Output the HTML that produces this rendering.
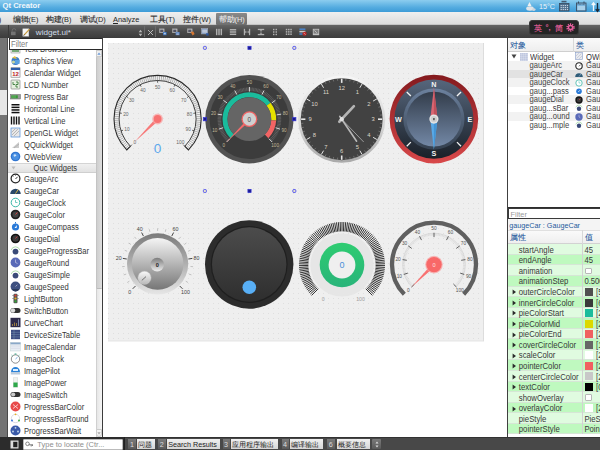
<!DOCTYPE html><html><head><meta charset="utf-8"><style>
html,body{margin:0;padding:0;width:600px;height:450px;overflow:hidden;background:#fff;position:relative;font-family:"Liberation Sans",sans-serif;}
.t{position:absolute;white-space:nowrap;line-height:1;font-family:"Liberation Sans",sans-serif;}
div{box-sizing:border-box;}
</style></head><body>
<div style="position:absolute;left:0px;top:0px;width:600px;height:12px;background:linear-gradient(#8ccdef,#55ace0 60%,#3d9bd7);"></div>
<div class="t" style="left:2.6px;top:2.2px;font-size:7.6px;color:#f2f7fb;font-weight:bold;">Qt Creator</div>
<div style="position:absolute;left:0px;top:12px;width:600px;height:13px;background:linear-gradient(#efefef,#dcdcdc);border-bottom:1px solid #c4c4c4;"></div>
<div class="t" style="left:-1.2px;top:15.9px;font-size:7.4px;color:#262626;">)</div>
<div class="t" style="left:12.5px;top:15.9px;font-size:7.4px;color:#262626;"><span style="font-size:7.8px;-webkit-text-stroke:0.12px #262626;">编</span><span style="font-size:7.8px;-webkit-text-stroke:0.12px #262626;">辑</span>(E)</div>
<div class="t" style="left:45.5px;top:15.9px;font-size:7.4px;color:#262626;"><span style="font-size:7.8px;-webkit-text-stroke:0.12px #262626;">构</span><span style="font-size:7.8px;-webkit-text-stroke:0.12px #262626;">建</span>(B)</div>
<div class="t" style="left:79.5px;top:15.9px;font-size:7.4px;color:#262626;"><span style="font-size:7.8px;-webkit-text-stroke:0.12px #262626;">调</span><span style="font-size:7.8px;-webkit-text-stroke:0.12px #262626;">试</span>(D)</div>
<div class="t" style="left:113px;top:15.9px;font-size:7.4px;color:#262626;"><u>A</u>nalyze</div>
<div class="t" style="left:149.5px;top:15.9px;font-size:7.4px;color:#262626;"><span style="font-size:7.8px;-webkit-text-stroke:0.12px #262626;">工</span><span style="font-size:7.8px;-webkit-text-stroke:0.12px #262626;">具</span>(T)</div>
<div class="t" style="left:183px;top:15.9px;font-size:7.4px;color:#262626;"><span style="font-size:7.8px;-webkit-text-stroke:0.12px #262626;">控</span><span style="font-size:7.8px;-webkit-text-stroke:0.12px #262626;">件</span>(W)</div>
<div style="position:absolute;left:215.5px;top:12.5px;width:31.5px;height:12.5px;background:linear-gradient(#8a8a8a,#6e6e6e);border-radius:1px;"></div>
<div class="t" style="left:218.5px;top:15.9px;font-size:7.4px;color:#ececec;"><span style="font-size:7.8px;-webkit-text-stroke:0.1px #ececec;">帮</span><span style="font-size:7.8px;-webkit-text-stroke:0.1px #ececec;">助</span>(H)</div>
<div style="position:absolute;left:0px;top:25px;width:600px;height:13px;background:linear-gradient(#646464,#4a4a4a 50%,#3c3c3c);"></div>
<div style="position:absolute;left:7.5px;top:25px;width:1px;height:13px;background:#3a3a3a;"></div>
<svg style="position:absolute;left:10px;top:28px" width="8" height="8" viewBox="0 0 8 8"><path d="M2.2 3.6V2.4a1.8 1.8 0 0 1 3.6 0" stroke="#707070" stroke-width="0.9" fill="none"/><rect x="1" y="3.6" width="4.6" height="3.6" fill="#747474"/></svg>
<svg style="position:absolute;left:22px;top:27.5px" width="9" height="9" viewBox="0 0 9 9"><rect x="0.8" y="0.8" width="6" height="7.4" fill="#f4f4f4" stroke="#ccc" stroke-width="0.4"/><path d="M2 7.2L7.6 1.2" stroke="#c89a3a" stroke-width="1.2"/><path d="M1.6 7.6L2.4 6.6" stroke="#333" stroke-width="0.8"/></svg>
<div class="t" style="left:35.8px;top:28.9px;font-size:8.1px;color:#d2deea;">widget.ui*</div>
<svg style="position:absolute;left:137.5px;top:28.5px" width="5" height="8" viewBox="0 0 5 8"><path d="M2.5 0.8L4.3 3.2H0.7Z M2.5 7.2L4.3 4.8H0.7Z" fill="#bbb"/></svg>
<div style="position:absolute;left:144px;top:26px;width:1px;height:11px;background:#3a3a3a;border-right:1px solid #6a6a6a;"></div>
<svg style="position:absolute;left:147px;top:28.5px" width="7" height="7" viewBox="0 0 7 7"><path d="M1 1L6 6M6 1L1 6" stroke="#c6c6c6" stroke-width="0.9"/></svg>
<div style="position:absolute;left:155px;top:26px;width:1px;height:11px;background:#3a3a3a;border-right:1px solid #6a6a6a;"></div>
<svg style="position:absolute;left:158.5px;top:27.5px;opacity:0.85" width="8" height="8" viewBox="0 0 10 10"><rect x="0.5" y="1" width="6" height="5" fill="#d8d8d8" stroke="#aaa" stroke-width="0.5"/><rect x="1.5" y="2" width="4" height="3" fill="#556"/><rect x="5" y="5" width="4.5" height="4" fill="#3a7bd5"/><rect x="6" y="6" width="2.5" height="2" fill="#cfe0f5"/></svg>
<svg style="position:absolute;left:172.3px;top:27.5px;opacity:0.85" width="8" height="8" viewBox="0 0 10 10"><rect x="0.5" y="1" width="6" height="5" fill="#d8d8d8" stroke="#aaa" stroke-width="0.5"/><rect x="1.5" y="2" width="4" height="3" fill="#556"/><rect x="4.5" y="5" width="5" height="4" fill="#5b8fd8"/><rect x="5.5" y="6" width="3" height="0.8" fill="#dde"/><rect x="5.5" y="7.5" width="3" height="0.8" fill="#dde"/></svg>
<svg style="position:absolute;left:186.8px;top:27.5px;opacity:0.85" width="8" height="8" viewBox="0 0 10 10"><rect x="0.5" y="1" width="6" height="5" fill="#d8d8d8" stroke="#aaa" stroke-width="0.5"/><rect x="1.5" y="2" width="4" height="3" fill="#556"/><path d="M4.5 5L8 4.5L9.5 7.5L7 9.5Z" fill="#f08030"/></svg>
<svg style="position:absolute;left:201px;top:27.5px;opacity:0.85" width="8" height="8" viewBox="0 0 10 10"><rect x="0.5" y="0.5" width="8" height="7" fill="#8aa8d8" stroke="#ccc" stroke-width="0.5"/><rect x="1.5" y="2" width="6" height="4" fill="#d0dcef"/><rect x="6.5" y="6.5" width="3" height="3" fill="#2a5ab0"/></svg>
<svg style="position:absolute;left:214.8px;top:27.5px;opacity:0.85" width="8" height="8" viewBox="0 0 10 10"><rect x="1.2" y="1" width="1.8" height="8" fill="#c4c4c4"/><rect x="4.1" y="1" width="1.8" height="8" fill="#c4c4c4"/><rect x="7" y="1" width="1.8" height="8" fill="#c4c4c4"/></svg>
<svg style="position:absolute;left:229px;top:27.5px;opacity:0.85" width="8" height="8" viewBox="0 0 10 10"><rect x="1" y="1.3" width="8" height="1.8" fill="#c4c4c4"/><rect x="1" y="4.1" width="8" height="1.8" fill="#c4c4c4"/><rect x="1" y="7" width="8" height="1.8" fill="#c4c4c4"/></svg>
<svg style="position:absolute;left:242.7px;top:27.5px;opacity:0.85" width="8" height="8" viewBox="0 0 10 10"><rect x="1" y="1" width="1.6" height="8" fill="#c4c4c4"/><rect x="7.4" y="1" width="1.6" height="8" fill="#c4c4c4"/><path d="M2.6 5H7.4M3.2 3.6L2.6 5L3.2 6.4M6.8 3.6L7.4 5L6.8 6.4" stroke="#c4c4c4" stroke-width="0.8" fill="none"/></svg>
<svg style="position:absolute;left:256.8px;top:27.5px;opacity:0.85" width="8" height="8" viewBox="0 0 10 10"><rect x="1" y="1" width="8" height="1.6" fill="#c4c4c4"/><rect x="1" y="7.4" width="8" height="1.6" fill="#c4c4c4"/><path d="M5 2.6V7.4M3.6 3.2L5 2.6L6.4 3.2M3.6 6.8L5 7.4L6.4 6.8" stroke="#c4c4c4" stroke-width="0.8" fill="none"/></svg>
<svg style="position:absolute;left:270.7px;top:27.5px;opacity:0.85" width="8" height="8" viewBox="0 0 10 10"><rect x="2.5" y="1" width="1.8" height="1.8" fill="#c4c4c4"/><rect x="5.7" y="1" width="1.8" height="1.8" fill="#c4c4c4"/><rect x="2.5" y="4.1" width="1.8" height="1.8" fill="#c4c4c4"/><rect x="5.7" y="4.1" width="1.8" height="1.8" fill="#c4c4c4"/><rect x="2.5" y="7.2" width="1.8" height="1.8" fill="#c4c4c4"/><rect x="5.7" y="7.2" width="1.8" height="1.8" fill="#c4c4c4"/></svg>
<svg style="position:absolute;left:284.7px;top:27.5px;opacity:0.85" width="8" height="8" viewBox="0 0 10 10"><rect x="1.0" y="1.0" width="1.9" height="1.9" fill="#c4c4c4"/><rect x="1.0" y="3.9" width="1.9" height="1.9" fill="#c4c4c4"/><rect x="1.0" y="6.8" width="1.9" height="1.9" fill="#c4c4c4"/><rect x="3.8" y="1.0" width="1.9" height="1.9" fill="#c4c4c4"/><rect x="3.8" y="3.9" width="1.9" height="1.9" fill="#c4c4c4"/><rect x="3.8" y="6.8" width="1.9" height="1.9" fill="#c4c4c4"/><rect x="6.6" y="1.0" width="1.9" height="1.9" fill="#c4c4c4"/><rect x="6.6" y="3.9" width="1.9" height="1.9" fill="#c4c4c4"/><rect x="6.6" y="6.8" width="1.9" height="1.9" fill="#c4c4c4"/></svg>
<svg style="position:absolute;left:298.5px;top:27.5px;opacity:0.85" width="8" height="8" viewBox="0 0 10 10"><rect x="0.5" y="0.5" width="7.5" height="2" fill="#4a8ad8"/><rect x="0.5" y="3.5" width="7.5" height="2" fill="#ddd"/><rect x="0.5" y="6.5" width="4" height="2" fill="#4a8ad8"/><circle cx="7" cy="7.2" r="2.6" fill="#d02020"/><path d="M5.8 6L8.2 8.4" stroke="#fff" stroke-width="0.7"/></svg>
<svg style="position:absolute;left:312.3px;top:27.5px;opacity:0.85" width="8" height="8" viewBox="0 0 10 10"><rect x="1" y="1" width="8" height="8" fill="#d8d8d8"/><rect x="2" y="2" width="6" height="5" fill="#888"/><path d="M3 3L6 6" stroke="#eee" stroke-width="0.9"/></svg>
<div style="position:absolute;left:529.3px;top:20.4px;width:49.3px;height:14.2px;background:#242424;border-radius:3px;border:0.6px solid #3a3a3a;"></div>
<div class="t" style="left:533.5px;top:24.2px;font-size:8.4px;color:#e8609e;-webkit-text-stroke:0.15px #e8609e;">英</div>
<div class="t" style="left:545.5px;top:23.6px;font-size:7.5px;color:#e8609e;font-weight:bold;">°,</div>
<div class="t" style="left:554.5px;top:24.2px;font-size:8.4px;color:#e8609e;-webkit-text-stroke:0.15px #e8609e;">简</div>
<svg style="position:absolute;left:565.5px;top:23.3px" width="9" height="9" viewBox="0 0 9 9"><circle cx="4.5" cy="4.5" r="3.4" fill="none" stroke="#e8609e" stroke-width="1.6" stroke-dasharray="1.2 0.95"/><circle cx="4.5" cy="4.5" r="2.7" fill="#e8609e"/><circle cx="4.5" cy="4.5" r="1.3" fill="#262626"/></svg>
<svg style="position:absolute;left:525px;top:1px" width="12" height="10" viewBox="0 0 12 10"><path d="M4.5 1L6.5 5H2.5Z" fill="#f0f0f0"/><ellipse cx="5" cy="7.5" rx="3.8" ry="2.2" fill="#e0e4e8"/><ellipse cx="8.8" cy="8.6" rx="1.8" ry="1.3" fill="#d0d6dc"/></svg>
<div class="t" style="left:539px;top:2.6px;font-size:7.2px;color:#eef4f8;">15°C</div>
<svg style="position:absolute;left:558px;top:0px" width="12" height="12" viewBox="0 0 12 12"><rect x="1.5" y="3.5" width="9.5" height="7.5" fill="#50708e" stroke="#34495e" stroke-width="0.8"/><rect x="2.6" y="5" width="1.2" height="1.1" fill="#c8d4e0"/><rect x="2.6" y="7" width="1.2" height="1.1" fill="#c8d4e0"/><rect x="2.6" y="9" width="1.2" height="1.1" fill="#c8d4e0"/><rect x="4.7" y="5" width="1.2" height="1.1" fill="#c8d4e0"/><rect x="4.7" y="7" width="1.2" height="1.1" fill="#c8d4e0"/><rect x="4.7" y="9" width="1.2" height="1.1" fill="#c8d4e0"/><rect x="6.800000000000001" y="5" width="1.2" height="1.1" fill="#c8d4e0"/><rect x="6.800000000000001" y="7" width="1.2" height="1.1" fill="#c8d4e0"/><rect x="6.800000000000001" y="9" width="1.2" height="1.1" fill="#c8d4e0"/><rect x="8.9" y="5" width="1.2" height="1.1" fill="#c8d4e0"/><rect x="8.9" y="7" width="1.2" height="1.1" fill="#c8d4e0"/><rect x="8.9" y="9" width="1.2" height="1.1" fill="#c8d4e0"/><rect x="3.5" y="0.8" width="5" height="1.6" fill="#465a70"/></svg>
<svg style="position:absolute;left:574.5px;top:0px" width="12" height="12" viewBox="0 0 12 12"><rect x="1.5" y="3" width="9.5" height="8" fill="#7ab4dc" stroke="#3a4e64" stroke-width="0.9"/><rect x="2.5" y="6" width="7.5" height="4" fill="#a8d0ea"/><path d="M2.5 4.5H10" stroke="#3a4e64" stroke-width="0.6" stroke-dasharray="0.8 0.6"/><rect x="3" y="1.5" width="1" height="2" fill="#3a4e64"/><rect x="8.5" y="1.5" width="1" height="2" fill="#3a4e64"/></svg>
<svg style="position:absolute;left:591px;top:0.5px" width="9" height="12" viewBox="0 0 9 12"><path d="M2.5 10V2.5M0.8 4L2.5 1.8L4.2 4" stroke="#f4f8fb" stroke-width="1.3" fill="none"/><path d="M6.5 2V10M4.8 8.2L6.5 10.4L8.2 8.2" stroke="#1e2a38" stroke-width="1.3" fill="none"/></svg>
<div style="position:absolute;left:0px;top:38px;width:8px;height:399px;background:#747474;"></div>
<div style="position:absolute;left:0px;top:90px;width:7.5px;height:25px;background:#e6e6e6;"></div>
<div style="position:absolute;left:7.2px;top:38px;width:1px;height:399px;background:#4a4a4a;"></div>
<div style="position:absolute;left:0px;top:437px;width:600px;height:13px;background:#484848;border-top:0.8px solid #333;"></div>
<div style="position:absolute;left:0px;top:437px;width:124.5px;height:13px;background:#2c2c2c;border-right:1px solid #222;"></div>
<div style="position:absolute;left:8px;top:38px;width:95px;height:399px;background:#fff;"></div>
<svg style="position:absolute;left:9.5px;top:43.2px" width="11" height="11" viewBox="0 0 11 11"><rect x="1" y="1" width="9" height="9" fill="#eee" stroke="#999" stroke-width="0.6"/><rect x="2" y="6" width="7" height="3" fill="#7a7"/></svg>
<div class="t" style="left:24px;top:45.800000000000004px;font-size:7.6px;color:#383838;transform:scaleY(1.12);transform-origin:0 100%;">Text Browser</div>
<svg style="position:absolute;left:9.5px;top:55.2px" width="11" height="11" viewBox="0 0 11 11"><circle cx="5.5" cy="6" r="4" fill="#3b7bc8"/><path d="M2 3L5 1L7 4Z" fill="#e8c040"/><rect x="5" y="5" width="4.5" height="4" fill="#5aa0e0"/><circle cx="3.5" cy="7" r="1.6" fill="#c8d8a0"/></svg>
<div class="t" style="left:24px;top:57.800000000000004px;font-size:7.6px;color:#383838;transform:scaleY(1.12);transform-origin:0 100%;">Graphics View</div>
<svg style="position:absolute;left:9.5px;top:67.2px" width="11" height="11" viewBox="0 0 11 11"><rect x="1" y="0.8" width="9" height="9.4" fill="#fafafa" stroke="#777" stroke-width="0.6"/><rect x="1" y="0.8" width="9" height="2.2" fill="#2c5ca8"/><text x="5.5" y="9" font-size="6" font-weight="bold" text-anchor="middle" fill="#c02020" font-family="Liberation Sans">12</text></svg>
<div class="t" style="left:24px;top:69.8px;font-size:7.6px;color:#383838;transform:scaleY(1.12);transform-origin:0 100%;">Calendar Widget</div>
<svg style="position:absolute;left:9.5px;top:79.2px" width="11" height="11" viewBox="0 0 11 11"><rect x="1" y="1" width="9" height="9" rx="0.8" fill="#e6f0e0" stroke="#777" stroke-width="0.6"/><path d="M3 3V5.5H5M6 3H8V5.5H6V8H8" stroke="#3a7a3a" stroke-width="0.9" fill="none"/></svg>
<div class="t" style="left:24px;top:81.8px;font-size:7.6px;color:#383838;transform:scaleY(1.12);transform-origin:0 100%;">LCD Number</div>
<svg style="position:absolute;left:9.5px;top:91.2px" width="11" height="11" viewBox="0 0 11 11"><rect x="0.5" y="3.5" width="10" height="4.5" fill="#999" stroke="#666" stroke-width="0.5"/><rect x="1.3" y="4.3" width="6.5" height="3" fill="#3a9a3a"/><path d="M3 4.3V7.3M5 4.3V7.3" stroke="#9c9" stroke-width="0.5"/></svg>
<div class="t" style="left:24px;top:93.8px;font-size:7.6px;color:#383838;transform:scaleY(1.12);transform-origin:0 100%;">Progress Bar</div>
<svg style="position:absolute;left:9.5px;top:103.2px" width="11" height="11" viewBox="0 0 11 11"><rect x="1.5" y="1" width="8" height="1.5" fill="#111"/><rect x="1.5" y="3.6" width="8" height="1.5" fill="#111"/><rect x="1.5" y="6.2" width="8" height="1.5" fill="#111"/><rect x="1.5" y="8.8" width="8" height="1.5" fill="#111"/></svg>
<div class="t" style="left:24px;top:105.8px;font-size:7.6px;color:#383838;transform:scaleY(1.12);transform-origin:0 100%;">Horizontal Line</div>
<svg style="position:absolute;left:9.5px;top:115.2px" width="11" height="11" viewBox="0 0 11 11"><rect x="0.8" y="1.5" width="1.4" height="8" fill="#111"/><rect x="3.3" y="1.5" width="1.4" height="8" fill="#111"/><rect x="5.8" y="1.5" width="1.4" height="8" fill="#111"/><rect x="8.3" y="1.5" width="1.4" height="8" fill="#111"/></svg>
<div class="t" style="left:24px;top:117.8px;font-size:7.6px;color:#383838;transform:scaleY(1.12);transform-origin:0 100%;">Vertical Line</div>
<svg style="position:absolute;left:9.5px;top:127.19999999999999px" width="11" height="11" viewBox="0 0 11 11"><rect x="1" y="1" width="9" height="9" fill="#e8e8e8" stroke="#4a8ad8" stroke-width="0.7"/><path d="M2 8L8 2M4 9L9 4M1.5 5.5L5.5 1.5" stroke="#aaa" stroke-width="0.8"/></svg>
<div class="t" style="left:24px;top:129.79999999999998px;font-size:7.6px;color:#383838;transform:scaleY(1.12);transform-origin:0 100%;">OpenGL Widget</div>
<svg style="position:absolute;left:9.5px;top:139.2px" width="11" height="11" viewBox="0 0 11 11"><path d="M2 9L9 3V9Z" fill="#ccc"/><path d="M4 9L9 5" stroke="#999" stroke-width="0.5"/></svg>
<div class="t" style="left:24px;top:141.79999999999998px;font-size:7.6px;color:#383838;transform:scaleY(1.12);transform-origin:0 100%;">QQuickWidget</div>
<svg style="position:absolute;left:9.5px;top:151.2px" width="11" height="11" viewBox="0 0 11 11"><circle cx="5.5" cy="5.5" r="4.8" fill="#2f74d0"/><circle cx="5.5" cy="5.5" r="3.5" fill="#4a90e2"/><path d="M3.5 4Q5 2.5 6.5 4.5Q5 6 4 5.5Z" fill="#cfe3f8"/></svg>
<div class="t" style="left:24px;top:153.79999999999998px;font-size:7.6px;color:#383838;transform:scaleY(1.12);transform-origin:0 100%;">QWebView</div>
<div style="position:absolute;left:8px;top:162.7px;width:88px;height:10.4px;background:linear-gradient(#f0f0f0,#e2e2e2);border-top:1px solid #d4d4d4;border-bottom:1px solid #cfcfcf;"></div>
<svg style="position:absolute;left:11px;top:165.5px" width="5" height="4" viewBox="0 0 5 4"><path d="M0.5 0.5H4.5L2.5 3.5Z" fill="#bbb"/></svg>
<div class="t" style="left:33.6px;top:164.5px;font-size:7.6px;color:#333;transform:scaleY(1.1);transform-origin:0 100%;">Quc Widgets</div>
<svg style="position:absolute;left:9.5px;top:173.4px" width="11" height="11" viewBox="0 0 11 11"><circle cx="5.5" cy="5.5" r="4.4" fill="#fff" stroke="#222" stroke-width="1.2"/><path d="M5.5 6L7.6 3.8" stroke="#222" stroke-width="0.9"/><path d="M3 3.2L3.6 3.8M5.5 2V2.8M8 3.2" stroke="#222" stroke-width="0.6"/></svg>
<div class="t" style="left:24px;top:176.0px;font-size:7.6px;color:#383838;transform:scaleY(1.12);transform-origin:0 100%;">GaugeArc</div>
<svg style="position:absolute;left:9.5px;top:185.4px" width="11" height="11" viewBox="0 0 11 11"><path d="M0.2 9A5.3 5.3 0 0 1 10.8 9Z" fill="#2a4868"/><path d="M5.5 8.6L8.2 4.6" stroke="#e8c040" stroke-width="0.9"/></svg>
<div class="t" style="left:24px;top:188.0px;font-size:7.6px;color:#383838;transform:scaleY(1.12);transform-origin:0 100%;">GaugeCar</div>
<svg style="position:absolute;left:9.5px;top:197.4px" width="11" height="11" viewBox="0 0 11 11"><circle cx="5.5" cy="5.5" r="4.3" fill="#fff" stroke="#3ab8a8" stroke-width="1"/><path d="M5.5 3V5.5H7.5" stroke="#3ab8a8" stroke-width="0.7" fill="none"/></svg>
<div class="t" style="left:24px;top:200.0px;font-size:7.6px;color:#383838;transform:scaleY(1.12);transform-origin:0 100%;">GaugeClock</div>
<svg style="position:absolute;left:9.5px;top:209.4px" width="11" height="11" viewBox="0 0 11 11"><circle cx="5.5" cy="5.5" r="4.8" fill="#222"/><circle cx="5.5" cy="5.5" r="3" fill="#444"/><path d="M5.5 5.5L7.5 3.5" stroke="#e04040" stroke-width="0.9"/></svg>
<div class="t" style="left:24px;top:212.0px;font-size:7.6px;color:#383838;transform:scaleY(1.12);transform-origin:0 100%;">GaugeColor</div>
<svg style="position:absolute;left:9.5px;top:221.4px" width="11" height="11" viewBox="0 0 11 11"><circle cx="5.5" cy="6" r="3.6" fill="#2a7ad8"/><path d="M4.5 7L7 4L6.5 7Z" fill="#fff"/><rect x="5" y="1" width="1" height="1.5" fill="#2a7ad8"/></svg>
<div class="t" style="left:24px;top:224.0px;font-size:7.6px;color:#383838;transform:scaleY(1.12);transform-origin:0 100%;">GaugeCompass</div>
<svg style="position:absolute;left:9.5px;top:233.4px" width="11" height="11" viewBox="0 0 11 11"><circle cx="5.5" cy="5.5" r="4.8" fill="#111"/><circle cx="5.5" cy="5.5" r="3.2" fill="#3a3a3a"/><path d="M5.5 5.5L7.2 3.6" stroke="#e04040" stroke-width="0.8"/></svg>
<div class="t" style="left:24px;top:236.0px;font-size:7.6px;color:#383838;transform:scaleY(1.12);transform-origin:0 100%;">GaugeDial</div>
<svg style="position:absolute;left:9.5px;top:245.4px" width="11" height="11" viewBox="0 0 11 11"><path d="M1.2 5A4.5 4.5 0 0 1 9.8 5" stroke="#7ac87a" stroke-width="0.6" fill="none"/><circle cx="5.5" cy="6.6" r="2.9" fill="#3a4a78"/></svg>
<div class="t" style="left:24px;top:248.0px;font-size:7.6px;color:#383838;transform:scaleY(1.12);transform-origin:0 100%;">GaugeProgressBar</div>
<svg style="position:absolute;left:9.5px;top:257.4px" width="11" height="11" viewBox="0 0 11 11"><circle cx="5.5" cy="5.5" r="4.9" fill="#5a6ab8"/><path d="M5.5 2.5V5.5L7.5 6.5" stroke="#dde" stroke-width="0.6" fill="none"/></svg>
<div class="t" style="left:24px;top:260.0px;font-size:7.6px;color:#383838;transform:scaleY(1.12);transform-origin:0 100%;">GaugeRound</div>
<svg style="position:absolute;left:9.5px;top:269.4px" width="11" height="11" viewBox="0 0 11 11"><path d="M1.2 5A4.5 4.5 0 0 1 9.8 5" stroke="#7ac87a" stroke-width="0.6" fill="none"/><circle cx="5.5" cy="6.6" r="2.9" fill="#3a4a78"/></svg>
<div class="t" style="left:24px;top:272.0px;font-size:7.6px;color:#383838;transform:scaleY(1.12);transform-origin:0 100%;">GaugeSimple</div>
<svg style="position:absolute;left:9.5px;top:281.4px" width="11" height="11" viewBox="0 0 11 11"><circle cx="5.5" cy="5.5" r="4.9" fill="#3e5080"/><path d="M1.5 8A4.5 4.5 0 0 0 9.5 8Z" fill="#2a3a5a"/><path d="M5.5 5.5L7.3 3.8" stroke="#dde" stroke-width="0.6"/></svg>
<div class="t" style="left:24px;top:284.0px;font-size:7.6px;color:#383838;transform:scaleY(1.12);transform-origin:0 100%;">GaugeSpeed</div>
<svg style="position:absolute;left:9.5px;top:293.4px" width="11" height="11" viewBox="0 0 11 11"><rect x="3.5" y="0.8" width="4" height="9.5" rx="1" fill="#555"/><circle cx="5.5" cy="2.6" r="1.1" fill="#e04030"/><circle cx="5.5" cy="5.5" r="1.1" fill="#e8b020"/><circle cx="5.5" cy="8.4" r="1.1" fill="#3a3"/><path d="M2.5 2.5H3.5M7.5 2.5H8.5M2.5 5.5H3.5M7.5 5.5H8.5" stroke="#555" stroke-width="0.8"/></svg>
<div class="t" style="left:24px;top:296.0px;font-size:7.6px;color:#383838;transform:scaleY(1.12);transform-origin:0 100%;">LightButton</div>
<svg style="position:absolute;left:9.5px;top:305.4px" width="11" height="11" viewBox="0 0 11 11"><rect x="0.5" y="3" width="10" height="5" rx="2.5" fill="#333"/><circle cx="3" cy="5.5" r="2.2" fill="#ddd"/></svg>
<div class="t" style="left:24px;top:308.0px;font-size:7.6px;color:#383838;transform:scaleY(1.12);transform-origin:0 100%;">SwitchButton</div>
<svg style="position:absolute;left:9.5px;top:317.4px" width="11" height="11" viewBox="0 0 11 11"><rect x="0.5" y="0.8" width="10" height="9.4" fill="#2d2a4a"/><path d="M2.5 9V7M4.5 9V5.5M6.5 9V6M8.5 9V2.5" stroke="#c8a040" stroke-width="0.7"/><path d="M8.5 9V2.5" stroke="#6a8ad8" stroke-width="0.7"/></svg>
<div class="t" style="left:24px;top:320.0px;font-size:7.6px;color:#383838;transform:scaleY(1.12);transform-origin:0 100%;">CurveChart</div>
<svg style="position:absolute;left:9.5px;top:329.4px" width="11" height="11" viewBox="0 0 11 11"><rect x="1" y="0.8" width="9" height="9.4" fill="#3a4a80"/><path d="M1 3.3H10M1 5.6H10M1 7.9H10M4 0.8V10.2" stroke="#8ab" stroke-width="0.4"/></svg>
<div class="t" style="left:24px;top:332.0px;font-size:7.6px;color:#383838;transform:scaleY(1.12);transform-origin:0 100%;">DeviceSizeTable</div>
<svg style="position:absolute;left:9.5px;top:341.4px" width="11" height="11" viewBox="0 0 11 11"><rect x="0.5" y="1.5" width="10" height="8.5" fill="#e8eef4" stroke="#bcc" stroke-width="0.4"/><rect x="0.5" y="1.5" width="10" height="1.8" fill="#8aa8c8"/><path d="M1 5H10M1 7.3H10" stroke="#ccd" stroke-width="0.5"/></svg>
<div class="t" style="left:24px;top:344.0px;font-size:7.6px;color:#383838;transform:scaleY(1.12);transform-origin:0 100%;">ImageCalendar</div>
<svg style="position:absolute;left:9.5px;top:353.4px" width="11" height="11" viewBox="0 0 11 11"><circle cx="5.5" cy="6" r="4.2" fill="#fff" stroke="#444" stroke-width="0.6"/><path d="M5.5 6L7.5 4.2" stroke="#3a8ad8" stroke-width="0.7"/><rect x="4.6" y="0.5" width="1.8" height="1" fill="#3a8"/><path d="M1.5 2L2.8 3M9.5 2L8.2 3" stroke="#3a8" stroke-width="0.6"/></svg>
<div class="t" style="left:24px;top:356.0px;font-size:7.6px;color:#383838;transform:scaleY(1.12);transform-origin:0 100%;">ImageClock</div>
<svg style="position:absolute;left:9.5px;top:365.4px" width="11" height="11" viewBox="0 0 11 11"><path d="M1 7A4.5 5 0 0 1 10 7Z" fill="#2a82d8"/><rect x="0.8" y="7" width="9.4" height="2.5" fill="#bcd"/><rect x="3" y="4" width="5" height="2" fill="#dfefff"/></svg>
<div class="t" style="left:24px;top:368.0px;font-size:7.6px;color:#383838;transform:scaleY(1.12);transform-origin:0 100%;">ImagePilot</div>
<svg style="position:absolute;left:9.5px;top:377.4px" width="11" height="11" viewBox="0 0 11 11"><rect x="3.2" y="0.8" width="4.6" height="9.5" fill="#eef2ee" stroke="#ccc" stroke-width="0.4"/><rect x="3.4" y="5.5" width="4.2" height="4.6" fill="#2ea84a"/></svg>
<div class="t" style="left:24px;top:380.0px;font-size:7.6px;color:#383838;transform:scaleY(1.12);transform-origin:0 100%;">ImagePower</div>
<svg style="position:absolute;left:9.5px;top:389.4px" width="11" height="11" viewBox="0 0 11 11"><rect x="0.5" y="3" width="10" height="5" rx="2.5" fill="#333"/><circle cx="3.2" cy="5.5" r="2.1" fill="#ccc"/></svg>
<div class="t" style="left:24px;top:392.0px;font-size:7.6px;color:#383838;transform:scaleY(1.12);transform-origin:0 100%;">ImageSwitch</div>
<svg style="position:absolute;left:9.5px;top:401.4px" width="11" height="11" viewBox="0 0 11 11"><circle cx="5.5" cy="5.5" r="5" fill="#e84a4a"/><path d="M3 3.5L5.5 5.5L8 3.5M3 7.5L5.5 5.5L8 7.5" stroke="#fff" stroke-width="0.7" fill="none"/></svg>
<div class="t" style="left:24px;top:404.0px;font-size:7.6px;color:#383838;transform:scaleY(1.12);transform-origin:0 100%;">ProgressBarColor</div>
<svg style="position:absolute;left:9.5px;top:413.4px" width="11" height="11" viewBox="0 0 11 11"><circle cx="5.5" cy="5.5" r="4.2" fill="none" stroke="#aab" stroke-width="0.4"/><circle cx="5.5" cy="1.3" r="0.9" fill="#e8b020"/><circle cx="9" cy="7.5" r="0.9" fill="#3a3"/><circle cx="2" cy="7.5" r="0.9" fill="#2a6ad8"/></svg>
<div class="t" style="left:24px;top:416.0px;font-size:7.6px;color:#383838;transform:scaleY(1.12);transform-origin:0 100%;">ProgressBarRound</div>
<svg style="position:absolute;left:9.5px;top:425.4px" width="11" height="11" viewBox="0 0 11 11"><circle cx="5.5" cy="5.5" r="5" fill="#3a5aa8"/><circle cx="5.5" cy="2.8" r="0.9" fill="#cde"/><circle cx="3" cy="6.5" r="0.9" fill="#cde"/><circle cx="8" cy="6.5" r="0.9" fill="#cde"/></svg>
<div class="t" style="left:24px;top:428.0px;font-size:7.6px;color:#383838;transform:scaleY(1.12);transform-origin:0 100%;">ProgressBarWait</div>
<div style="position:absolute;left:8.5px;top:38px;width:94px;height:11.8px;background:#fff;border:1px solid #2a2a2a;border-right-color:#555;"></div>
<div class="t" style="left:11px;top:41px;font-size:7.6px;color:#808080;transform:scaleY(1.1);transform-origin:0 100%;">Filter</div>
<div style="position:absolute;left:96px;top:50px;width:6.3px;height:387px;background:linear-gradient(90deg,#e6e6e6,#f6f6f6);border-left:1px solid #d0d0d0;"></div>
<div style="position:absolute;left:96px;top:57px;width:6.3px;height:232px;background:linear-gradient(90deg,#cfcfcf,#dedede);border-radius:1px;border-left:1px solid #c4c4c4;border-bottom:1px solid #bbb;"></div>
<div style="position:absolute;left:96px;top:50px;width:6.3px;height:7px;background:#f0f0f0;border:0.5px solid #ccc;"></div>
<svg style="position:absolute;left:97.3px;top:52px" width="4" height="3" viewBox="0 0 4 3"><path d="M0.3 2.7L2 0.5L3.7 2.7Z" fill="#6a9ad8"/></svg>
<div style="position:absolute;left:96px;top:429px;width:6.3px;height:8px;background:#f4f4f4;border:0.5px solid #ccc;border-radius:0 0 3px 3px;"></div>
<svg style="position:absolute;left:97.3px;top:432px" width="4" height="3" viewBox="0 0 4 3"><path d="M0.3 0.3L2 2.5L3.7 0.3Z" fill="#aaa"/></svg>
<div style="position:absolute;left:102.2px;top:38px;width:1.2px;height:399px;background:#3c3c3c;"></div>
<svg style="position:absolute;left:0;top:0" width="600" height="450" viewBox="0 0 600 450">
<defs><pattern id="dots" x="108" y="43" width="5" height="5" patternUnits="userSpaceOnUse"><rect x="0" y="0" width="5" height="5" fill="#efefef"/><rect x="0" y="0" width="1" height="1" fill="#dfdfdf"/></pattern></defs>
<rect x="108" y="43" width="375.6" height="298.3" fill="url(#dots)"/>
<rect x="483" y="43" width="0.8" height="298.3" fill="#d8d8d8"/><rect x="108" y="340.6" width="375.6" height="0.7" fill="#e0e0e0"/>
<path d="M128.61 147.99A41 41 0 1 1 186.59 147.99" stroke="#f4f4f4" stroke-width="6" fill="none"/><line x1="130.16" y1="146.44" x2="127.05" y2="149.55" stroke="#555" stroke-width="0.42"/><line x1="128.90" y1="145.11" x2="125.65" y2="148.07" stroke="#555" stroke-width="0.42"/><line x1="127.70" y1="143.73" x2="124.31" y2="146.54" stroke="#555" stroke-width="0.42"/><line x1="126.57" y1="142.30" x2="123.05" y2="144.94" stroke="#555" stroke-width="0.42"/><line x1="125.51" y1="140.81" x2="121.87" y2="143.28" stroke="#555" stroke-width="0.42"/><line x1="124.52" y1="139.27" x2="120.77" y2="141.57" stroke="#555" stroke-width="0.42"/><line x1="123.60" y1="137.69" x2="119.74" y2="139.81" stroke="#555" stroke-width="0.42"/><line x1="122.76" y1="136.07" x2="118.81" y2="138.01" stroke="#555" stroke-width="0.42"/><line x1="121.99" y1="134.41" x2="117.95" y2="136.16" stroke="#555" stroke-width="0.42"/><line x1="121.30" y1="132.71" x2="117.19" y2="134.27" stroke="#555" stroke-width="0.42"/><line x1="120.70" y1="130.99" x2="116.51" y2="132.35" stroke="#555" stroke-width="0.42"/><line x1="120.18" y1="129.24" x2="115.93" y2="130.40" stroke="#555" stroke-width="0.42"/><line x1="119.73" y1="127.46" x2="115.44" y2="128.42" stroke="#555" stroke-width="0.42"/><line x1="119.38" y1="125.67" x2="115.04" y2="126.43" stroke="#555" stroke-width="0.42"/><line x1="119.11" y1="123.86" x2="114.74" y2="124.41" stroke="#555" stroke-width="0.42"/><line x1="118.92" y1="122.04" x2="114.53" y2="122.39" stroke="#555" stroke-width="0.42"/><line x1="118.82" y1="120.22" x2="114.42" y2="120.36" stroke="#555" stroke-width="0.42"/><line x1="118.80" y1="118.39" x2="114.41" y2="118.32" stroke="#555" stroke-width="0.42"/><line x1="118.88" y1="116.56" x2="114.49" y2="116.29" stroke="#555" stroke-width="0.42"/><line x1="119.03" y1="114.74" x2="114.66" y2="114.26" stroke="#555" stroke-width="0.42"/><line x1="119.28" y1="112.93" x2="114.93" y2="112.24" stroke="#555" stroke-width="0.42"/><line x1="119.61" y1="111.13" x2="115.30" y2="110.24" stroke="#555" stroke-width="0.42"/><line x1="120.02" y1="109.35" x2="115.76" y2="108.26" stroke="#555" stroke-width="0.42"/><line x1="120.52" y1="107.59" x2="116.31" y2="106.30" stroke="#555" stroke-width="0.42"/><line x1="121.09" y1="105.86" x2="116.95" y2="104.37" stroke="#555" stroke-width="0.42"/><line x1="121.75" y1="104.15" x2="117.69" y2="102.47" stroke="#555" stroke-width="0.42"/><line x1="122.49" y1="102.48" x2="118.51" y2="100.61" stroke="#555" stroke-width="0.42"/><line x1="123.31" y1="100.84" x2="119.42" y2="98.79" stroke="#555" stroke-width="0.42"/><line x1="124.20" y1="99.25" x2="120.42" y2="97.01" stroke="#555" stroke-width="0.42"/><line x1="125.17" y1="97.70" x2="121.49" y2="95.28" stroke="#555" stroke-width="0.42"/><line x1="126.21" y1="96.19" x2="122.65" y2="93.61" stroke="#555" stroke-width="0.42"/><line x1="127.32" y1="94.74" x2="123.89" y2="91.99" stroke="#555" stroke-width="0.42"/><line x1="128.50" y1="93.34" x2="125.20" y2="90.43" stroke="#555" stroke-width="0.42"/><line x1="129.74" y1="92.00" x2="126.58" y2="88.94" stroke="#555" stroke-width="0.42"/><line x1="131.04" y1="90.72" x2="128.03" y2="87.51" stroke="#555" stroke-width="0.42"/><line x1="132.40" y1="89.50" x2="129.54" y2="86.15" stroke="#555" stroke-width="0.42"/><line x1="133.82" y1="88.34" x2="131.12" y2="84.87" stroke="#555" stroke-width="0.42"/><line x1="135.29" y1="87.26" x2="132.76" y2="83.66" stroke="#555" stroke-width="0.42"/><line x1="136.81" y1="86.24" x2="134.45" y2="82.53" stroke="#555" stroke-width="0.42"/><line x1="138.38" y1="85.30" x2="136.20" y2="81.48" stroke="#555" stroke-width="0.42"/><line x1="139.99" y1="84.43" x2="137.99" y2="80.51" stroke="#555" stroke-width="0.42"/><line x1="141.63" y1="83.64" x2="139.82" y2="79.63" stroke="#555" stroke-width="0.42"/><line x1="143.32" y1="82.92" x2="141.70" y2="78.83" stroke="#555" stroke-width="0.42"/><line x1="145.03" y1="82.29" x2="143.61" y2="78.13" stroke="#555" stroke-width="0.42"/><line x1="146.78" y1="81.74" x2="145.55" y2="77.52" stroke="#555" stroke-width="0.42"/><line x1="148.54" y1="81.27" x2="147.52" y2="76.99" stroke="#555" stroke-width="0.42"/><line x1="150.33" y1="80.89" x2="149.51" y2="76.57" stroke="#555" stroke-width="0.42"/><line x1="152.13" y1="80.59" x2="151.51" y2="76.23" stroke="#555" stroke-width="0.42"/><line x1="153.95" y1="80.37" x2="153.53" y2="75.99" stroke="#555" stroke-width="0.42"/><line x1="155.77" y1="80.24" x2="155.57" y2="75.85" stroke="#555" stroke-width="0.42"/><line x1="157.60" y1="80.20" x2="157.60" y2="75.80" stroke="#555" stroke-width="0.42"/><line x1="159.43" y1="80.24" x2="159.63" y2="75.85" stroke="#555" stroke-width="0.42"/><line x1="161.25" y1="80.37" x2="161.67" y2="75.99" stroke="#555" stroke-width="0.42"/><line x1="163.07" y1="80.59" x2="163.69" y2="76.23" stroke="#555" stroke-width="0.42"/><line x1="164.87" y1="80.89" x2="165.69" y2="76.57" stroke="#555" stroke-width="0.42"/><line x1="166.66" y1="81.27" x2="167.68" y2="76.99" stroke="#555" stroke-width="0.42"/><line x1="168.42" y1="81.74" x2="169.65" y2="77.52" stroke="#555" stroke-width="0.42"/><line x1="170.17" y1="82.29" x2="171.59" y2="78.13" stroke="#555" stroke-width="0.42"/><line x1="171.88" y1="82.92" x2="173.50" y2="78.83" stroke="#555" stroke-width="0.42"/><line x1="173.57" y1="83.64" x2="175.38" y2="79.63" stroke="#555" stroke-width="0.42"/><line x1="175.21" y1="84.43" x2="177.21" y2="80.51" stroke="#555" stroke-width="0.42"/><line x1="176.82" y1="85.30" x2="179.00" y2="81.48" stroke="#555" stroke-width="0.42"/><line x1="178.39" y1="86.24" x2="180.75" y2="82.53" stroke="#555" stroke-width="0.42"/><line x1="179.91" y1="87.26" x2="182.44" y2="83.66" stroke="#555" stroke-width="0.42"/><line x1="181.38" y1="88.34" x2="184.08" y2="84.87" stroke="#555" stroke-width="0.42"/><line x1="182.80" y1="89.50" x2="185.66" y2="86.15" stroke="#555" stroke-width="0.42"/><line x1="184.16" y1="90.72" x2="187.17" y2="87.51" stroke="#555" stroke-width="0.42"/><line x1="185.46" y1="92.00" x2="188.62" y2="88.94" stroke="#555" stroke-width="0.42"/><line x1="186.70" y1="93.34" x2="190.00" y2="90.43" stroke="#555" stroke-width="0.42"/><line x1="187.88" y1="94.74" x2="191.31" y2="91.99" stroke="#555" stroke-width="0.42"/><line x1="188.99" y1="96.19" x2="192.55" y2="93.61" stroke="#555" stroke-width="0.42"/><line x1="190.03" y1="97.70" x2="193.71" y2="95.28" stroke="#555" stroke-width="0.42"/><line x1="191.00" y1="99.25" x2="194.78" y2="97.01" stroke="#555" stroke-width="0.42"/><line x1="191.89" y1="100.84" x2="195.78" y2="98.79" stroke="#555" stroke-width="0.42"/><line x1="192.71" y1="102.48" x2="196.69" y2="100.61" stroke="#555" stroke-width="0.42"/><line x1="193.45" y1="104.15" x2="197.51" y2="102.47" stroke="#555" stroke-width="0.42"/><line x1="194.11" y1="105.86" x2="198.25" y2="104.37" stroke="#555" stroke-width="0.42"/><line x1="194.68" y1="107.59" x2="198.89" y2="106.30" stroke="#555" stroke-width="0.42"/><line x1="195.18" y1="109.35" x2="199.44" y2="108.26" stroke="#555" stroke-width="0.42"/><line x1="195.59" y1="111.13" x2="199.90" y2="110.24" stroke="#555" stroke-width="0.42"/><line x1="195.92" y1="112.93" x2="200.27" y2="112.24" stroke="#555" stroke-width="0.42"/><line x1="196.17" y1="114.74" x2="200.54" y2="114.26" stroke="#555" stroke-width="0.42"/><line x1="196.32" y1="116.56" x2="200.71" y2="116.29" stroke="#555" stroke-width="0.42"/><line x1="196.40" y1="118.39" x2="200.79" y2="118.32" stroke="#555" stroke-width="0.42"/><line x1="196.38" y1="120.22" x2="200.78" y2="120.36" stroke="#555" stroke-width="0.42"/><line x1="196.28" y1="122.04" x2="200.67" y2="122.39" stroke="#555" stroke-width="0.42"/><line x1="196.09" y1="123.86" x2="200.46" y2="124.41" stroke="#555" stroke-width="0.42"/><line x1="195.82" y1="125.67" x2="200.16" y2="126.43" stroke="#555" stroke-width="0.42"/><line x1="195.47" y1="127.46" x2="199.76" y2="128.42" stroke="#555" stroke-width="0.42"/><line x1="195.02" y1="129.24" x2="199.27" y2="130.40" stroke="#555" stroke-width="0.42"/><line x1="194.50" y1="130.99" x2="198.69" y2="132.35" stroke="#555" stroke-width="0.42"/><line x1="193.90" y1="132.71" x2="198.01" y2="134.27" stroke="#555" stroke-width="0.42"/><line x1="193.21" y1="134.41" x2="197.25" y2="136.16" stroke="#555" stroke-width="0.42"/><line x1="192.44" y1="136.07" x2="196.39" y2="138.01" stroke="#555" stroke-width="0.42"/><line x1="191.60" y1="137.69" x2="195.46" y2="139.81" stroke="#555" stroke-width="0.42"/><line x1="190.68" y1="139.27" x2="194.43" y2="141.57" stroke="#555" stroke-width="0.42"/><line x1="189.69" y1="140.81" x2="193.33" y2="143.28" stroke="#555" stroke-width="0.42"/><line x1="188.63" y1="142.30" x2="192.15" y2="144.94" stroke="#555" stroke-width="0.42"/><line x1="187.50" y1="143.73" x2="190.89" y2="146.54" stroke="#555" stroke-width="0.42"/><line x1="186.30" y1="145.11" x2="189.55" y2="148.07" stroke="#555" stroke-width="0.42"/><line x1="185.04" y1="146.44" x2="188.15" y2="149.55" stroke="#555" stroke-width="0.42"/><path d="M126.77 149.83A43.6 43.6 0 1 1 188.43 149.83" stroke="#2a2a2a" stroke-width="1.1" fill="none"/><path d="M130.38 146.22A38.5 38.5 0 1 1 184.82 146.22" stroke="#2a2a2a" stroke-width="0.9" fill="none"/><line x1="130.52" y1="146.08" x2="126.35" y2="150.25" stroke="#2a2a2a" stroke-width="1.1"/><line x1="184.68" y1="146.08" x2="188.85" y2="150.25" stroke="#2a2a2a" stroke-width="1.1"/><line x1="131.93" y1="144.67" x2="130.38" y2="146.22" stroke="#333" stroke-width="0.8"/><text x="134.83" y="143.50" font-size="4.8" fill="#666" text-anchor="middle" font-weight="normal" font-family="Liberation Sans">0</text><line x1="123.08" y1="130.22" x2="120.98" y2="130.90" stroke="#333" stroke-width="0.8"/><text x="126.98" y="130.68" font-size="4.8" fill="#666" text-anchor="middle" font-weight="normal" font-family="Liberation Sans">10</text><line x1="121.75" y1="113.32" x2="119.57" y2="112.98" stroke="#333" stroke-width="0.8"/><text x="125.80" y="115.69" font-size="4.8" fill="#666" text-anchor="middle" font-weight="normal" font-family="Liberation Sans">20</text><line x1="128.23" y1="97.66" x2="126.45" y2="96.37" stroke="#333" stroke-width="0.8"/><text x="131.55" y="101.80" font-size="4.8" fill="#666" text-anchor="middle" font-weight="normal" font-family="Liberation Sans">30</text><line x1="141.12" y1="86.66" x2="140.12" y2="84.70" stroke="#333" stroke-width="0.8"/><text x="142.98" y="92.04" font-size="4.8" fill="#666" text-anchor="middle" font-weight="normal" font-family="Liberation Sans">40</text><line x1="157.60" y1="82.70" x2="157.60" y2="80.50" stroke="#333" stroke-width="0.8"/><text x="157.60" y="88.53" font-size="4.8" fill="#666" text-anchor="middle" font-weight="normal" font-family="Liberation Sans">50</text><line x1="174.08" y1="86.66" x2="175.08" y2="84.70" stroke="#333" stroke-width="0.8"/><text x="172.22" y="92.04" font-size="4.8" fill="#666" text-anchor="middle" font-weight="normal" font-family="Liberation Sans">60</text><line x1="186.97" y1="97.66" x2="188.75" y2="96.37" stroke="#333" stroke-width="0.8"/><text x="183.65" y="101.80" font-size="4.8" fill="#666" text-anchor="middle" font-weight="normal" font-family="Liberation Sans">70</text><line x1="193.45" y1="113.32" x2="195.63" y2="112.98" stroke="#333" stroke-width="0.8"/><text x="189.40" y="115.69" font-size="4.8" fill="#666" text-anchor="middle" font-weight="normal" font-family="Liberation Sans">80</text><line x1="192.12" y1="130.22" x2="194.22" y2="130.90" stroke="#333" stroke-width="0.8"/><text x="188.22" y="130.68" font-size="4.8" fill="#666" text-anchor="middle" font-weight="normal" font-family="Liberation Sans">90</text><line x1="183.27" y1="144.67" x2="184.82" y2="146.22" stroke="#333" stroke-width="0.8"/><text x="180.37" y="143.50" font-size="4.8" fill="#666" text-anchor="middle" font-weight="normal" font-family="Liberation Sans">100</text><path d="M156.33 117.73L134.27 142.33L158.87 120.27Z" fill="#f77a7a"/><circle cx="157.6" cy="119" r="5.4" fill="#f9aaaa" opacity="0.8"/><circle cx="157.6" cy="119" r="3.9" fill="#f77272"/><text x="157.6" y="153.4" font-size="13.6" fill="#5ea8ec" text-anchor="middle" font-family="Liberation Sans">0</text>
<circle cx="249.4" cy="119.2" r="44.2" fill="#525252"/><circle cx="249.4" cy="119.2" r="39.8" fill="#3c3c3c"/><line x1="229.46" y1="139.14" x2="226.91" y2="141.69" stroke="#8c8c8c" stroke-width="0.42"/><line x1="228.54" y1="138.18" x2="225.88" y2="140.60" stroke="#8c8c8c" stroke-width="0.42"/><line x1="227.67" y1="137.18" x2="224.90" y2="139.47" stroke="#8c8c8c" stroke-width="0.42"/><line x1="226.85" y1="136.13" x2="223.97" y2="138.29" stroke="#8c8c8c" stroke-width="0.42"/><line x1="226.08" y1="135.05" x2="223.10" y2="137.07" stroke="#8c8c8c" stroke-width="0.42"/><line x1="225.36" y1="133.93" x2="222.29" y2="135.82" stroke="#8c8c8c" stroke-width="0.42"/><line x1="224.69" y1="132.79" x2="221.53" y2="134.52" stroke="#8c8c8c" stroke-width="0.42"/><line x1="224.08" y1="131.61" x2="220.84" y2="133.19" stroke="#8c8c8c" stroke-width="0.42"/><line x1="223.52" y1="130.40" x2="220.22" y2="131.83" stroke="#8c8c8c" stroke-width="0.42"/><line x1="223.02" y1="129.17" x2="219.65" y2="130.44" stroke="#8c8c8c" stroke-width="0.42"/><line x1="222.58" y1="127.91" x2="219.16" y2="129.03" stroke="#8c8c8c" stroke-width="0.42"/><line x1="222.20" y1="126.64" x2="218.73" y2="127.59" stroke="#8c8c8c" stroke-width="0.42"/><line x1="221.88" y1="125.35" x2="218.37" y2="126.14" stroke="#8c8c8c" stroke-width="0.42"/><line x1="221.62" y1="124.05" x2="218.07" y2="124.67" stroke="#8c8c8c" stroke-width="0.42"/><line x1="221.42" y1="122.73" x2="217.85" y2="123.19" stroke="#8c8c8c" stroke-width="0.42"/><line x1="221.29" y1="121.41" x2="217.70" y2="121.69" stroke="#8c8c8c" stroke-width="0.42"/><line x1="221.21" y1="120.09" x2="217.62" y2="120.20" stroke="#8c8c8c" stroke-width="0.42"/><line x1="221.20" y1="118.76" x2="217.60" y2="118.70" stroke="#8c8c8c" stroke-width="0.42"/><line x1="221.26" y1="117.43" x2="217.66" y2="117.20" stroke="#8c8c8c" stroke-width="0.42"/><line x1="221.37" y1="116.11" x2="217.79" y2="115.71" stroke="#8c8c8c" stroke-width="0.42"/><line x1="221.55" y1="114.79" x2="217.99" y2="114.23" stroke="#8c8c8c" stroke-width="0.42"/><line x1="221.79" y1="113.48" x2="218.26" y2="112.75" stroke="#8c8c8c" stroke-width="0.42"/><line x1="222.09" y1="112.19" x2="218.60" y2="111.29" stroke="#8c8c8c" stroke-width="0.42"/><line x1="222.45" y1="110.91" x2="219.01" y2="109.85" stroke="#8c8c8c" stroke-width="0.42"/><line x1="222.87" y1="109.65" x2="219.48" y2="108.43" stroke="#8c8c8c" stroke-width="0.42"/><line x1="223.35" y1="108.41" x2="220.02" y2="107.03" stroke="#8c8c8c" stroke-width="0.42"/><line x1="223.88" y1="107.19" x2="220.63" y2="105.66" stroke="#8c8c8c" stroke-width="0.42"/><line x1="224.48" y1="106.00" x2="221.30" y2="104.32" stroke="#8c8c8c" stroke-width="0.42"/><line x1="225.13" y1="104.85" x2="222.03" y2="103.01" stroke="#8c8c8c" stroke-width="0.42"/><line x1="225.83" y1="103.72" x2="222.82" y2="101.74" stroke="#8c8c8c" stroke-width="0.42"/><line x1="226.59" y1="102.62" x2="223.67" y2="100.51" stroke="#8c8c8c" stroke-width="0.42"/><line x1="227.39" y1="101.57" x2="224.58" y2="99.32" stroke="#8c8c8c" stroke-width="0.42"/><line x1="228.25" y1="100.55" x2="225.55" y2="98.17" stroke="#8c8c8c" stroke-width="0.42"/><line x1="229.15" y1="99.58" x2="226.56" y2="97.07" stroke="#8c8c8c" stroke-width="0.42"/><line x1="230.10" y1="98.64" x2="227.63" y2="96.02" stroke="#8c8c8c" stroke-width="0.42"/><line x1="231.09" y1="97.76" x2="228.75" y2="95.02" stroke="#8c8c8c" stroke-width="0.42"/><line x1="232.12" y1="96.92" x2="229.91" y2="94.07" stroke="#8c8c8c" stroke-width="0.42"/><line x1="233.18" y1="96.13" x2="231.11" y2="93.18" stroke="#8c8c8c" stroke-width="0.42"/><line x1="234.29" y1="95.39" x2="232.36" y2="92.35" stroke="#8c8c8c" stroke-width="0.42"/><line x1="235.43" y1="94.70" x2="233.64" y2="91.58" stroke="#8c8c8c" stroke-width="0.42"/><line x1="236.60" y1="94.07" x2="234.96" y2="90.87" stroke="#8c8c8c" stroke-width="0.42"/><line x1="237.80" y1="93.50" x2="236.31" y2="90.22" stroke="#8c8c8c" stroke-width="0.42"/><line x1="239.02" y1="92.98" x2="237.69" y2="89.63" stroke="#8c8c8c" stroke-width="0.42"/><line x1="240.27" y1="92.52" x2="239.10" y2="89.11" stroke="#8c8c8c" stroke-width="0.42"/><line x1="241.53" y1="92.12" x2="240.53" y2="88.66" stroke="#8c8c8c" stroke-width="0.42"/><line x1="242.82" y1="91.78" x2="241.98" y2="88.28" stroke="#8c8c8c" stroke-width="0.42"/><line x1="244.12" y1="91.50" x2="243.44" y2="87.96" stroke="#8c8c8c" stroke-width="0.42"/><line x1="245.43" y1="91.28" x2="244.92" y2="87.72" stroke="#8c8c8c" stroke-width="0.42"/><line x1="246.75" y1="91.13" x2="246.41" y2="87.54" stroke="#8c8c8c" stroke-width="0.42"/><line x1="248.07" y1="91.03" x2="247.90" y2="87.44" stroke="#8c8c8c" stroke-width="0.42"/><line x1="249.40" y1="91.00" x2="249.40" y2="87.40" stroke="#8c8c8c" stroke-width="0.42"/><line x1="250.73" y1="91.03" x2="250.90" y2="87.44" stroke="#8c8c8c" stroke-width="0.42"/><line x1="252.05" y1="91.13" x2="252.39" y2="87.54" stroke="#8c8c8c" stroke-width="0.42"/><line x1="253.37" y1="91.28" x2="253.88" y2="87.72" stroke="#8c8c8c" stroke-width="0.42"/><line x1="254.68" y1="91.50" x2="255.36" y2="87.96" stroke="#8c8c8c" stroke-width="0.42"/><line x1="255.98" y1="91.78" x2="256.82" y2="88.28" stroke="#8c8c8c" stroke-width="0.42"/><line x1="257.27" y1="92.12" x2="258.27" y2="88.66" stroke="#8c8c8c" stroke-width="0.42"/><line x1="258.53" y1="92.52" x2="259.70" y2="89.11" stroke="#8c8c8c" stroke-width="0.42"/><line x1="259.78" y1="92.98" x2="261.11" y2="89.63" stroke="#8c8c8c" stroke-width="0.42"/><line x1="261.00" y1="93.50" x2="262.49" y2="90.22" stroke="#8c8c8c" stroke-width="0.42"/><line x1="262.20" y1="94.07" x2="263.84" y2="90.87" stroke="#8c8c8c" stroke-width="0.42"/><line x1="263.37" y1="94.70" x2="265.16" y2="91.58" stroke="#8c8c8c" stroke-width="0.42"/><line x1="264.51" y1="95.39" x2="266.44" y2="92.35" stroke="#8c8c8c" stroke-width="0.42"/><line x1="265.62" y1="96.13" x2="267.69" y2="93.18" stroke="#8c8c8c" stroke-width="0.42"/><line x1="266.68" y1="96.92" x2="268.89" y2="94.07" stroke="#8c8c8c" stroke-width="0.42"/><line x1="267.71" y1="97.76" x2="270.05" y2="95.02" stroke="#8c8c8c" stroke-width="0.42"/><line x1="268.70" y1="98.64" x2="271.17" y2="96.02" stroke="#8c8c8c" stroke-width="0.42"/><line x1="269.65" y1="99.58" x2="272.24" y2="97.07" stroke="#8c8c8c" stroke-width="0.42"/><line x1="270.55" y1="100.55" x2="273.25" y2="98.17" stroke="#8c8c8c" stroke-width="0.42"/><line x1="271.41" y1="101.57" x2="274.22" y2="99.32" stroke="#8c8c8c" stroke-width="0.42"/><line x1="272.21" y1="102.62" x2="275.13" y2="100.51" stroke="#8c8c8c" stroke-width="0.42"/><line x1="272.97" y1="103.72" x2="275.98" y2="101.74" stroke="#8c8c8c" stroke-width="0.42"/><line x1="273.67" y1="104.85" x2="276.77" y2="103.01" stroke="#8c8c8c" stroke-width="0.42"/><line x1="274.32" y1="106.00" x2="277.50" y2="104.32" stroke="#8c8c8c" stroke-width="0.42"/><line x1="274.92" y1="107.19" x2="278.17" y2="105.66" stroke="#8c8c8c" stroke-width="0.42"/><line x1="275.45" y1="108.41" x2="278.78" y2="107.03" stroke="#8c8c8c" stroke-width="0.42"/><line x1="275.93" y1="109.65" x2="279.32" y2="108.43" stroke="#8c8c8c" stroke-width="0.42"/><line x1="276.35" y1="110.91" x2="279.79" y2="109.85" stroke="#8c8c8c" stroke-width="0.42"/><line x1="276.71" y1="112.19" x2="280.20" y2="111.29" stroke="#8c8c8c" stroke-width="0.42"/><line x1="277.01" y1="113.48" x2="280.54" y2="112.75" stroke="#8c8c8c" stroke-width="0.42"/><line x1="277.25" y1="114.79" x2="280.81" y2="114.23" stroke="#8c8c8c" stroke-width="0.42"/><line x1="277.43" y1="116.11" x2="281.01" y2="115.71" stroke="#8c8c8c" stroke-width="0.42"/><line x1="277.54" y1="117.43" x2="281.14" y2="117.20" stroke="#8c8c8c" stroke-width="0.42"/><line x1="277.60" y1="118.76" x2="281.20" y2="118.70" stroke="#8c8c8c" stroke-width="0.42"/><line x1="277.59" y1="120.09" x2="281.18" y2="120.20" stroke="#8c8c8c" stroke-width="0.42"/><line x1="277.51" y1="121.41" x2="281.10" y2="121.69" stroke="#8c8c8c" stroke-width="0.42"/><line x1="277.38" y1="122.73" x2="280.95" y2="123.19" stroke="#8c8c8c" stroke-width="0.42"/><line x1="277.18" y1="124.05" x2="280.73" y2="124.67" stroke="#8c8c8c" stroke-width="0.42"/><line x1="276.92" y1="125.35" x2="280.43" y2="126.14" stroke="#8c8c8c" stroke-width="0.42"/><line x1="276.60" y1="126.64" x2="280.07" y2="127.59" stroke="#8c8c8c" stroke-width="0.42"/><line x1="276.22" y1="127.91" x2="279.64" y2="129.03" stroke="#8c8c8c" stroke-width="0.42"/><line x1="275.78" y1="129.17" x2="279.15" y2="130.44" stroke="#8c8c8c" stroke-width="0.42"/><line x1="275.28" y1="130.40" x2="278.58" y2="131.83" stroke="#8c8c8c" stroke-width="0.42"/><line x1="274.72" y1="131.61" x2="277.96" y2="133.19" stroke="#8c8c8c" stroke-width="0.42"/><line x1="274.11" y1="132.79" x2="277.27" y2="134.52" stroke="#8c8c8c" stroke-width="0.42"/><line x1="273.44" y1="133.93" x2="276.51" y2="135.82" stroke="#8c8c8c" stroke-width="0.42"/><line x1="272.72" y1="135.05" x2="275.70" y2="137.07" stroke="#8c8c8c" stroke-width="0.42"/><line x1="271.95" y1="136.13" x2="274.83" y2="138.29" stroke="#8c8c8c" stroke-width="0.42"/><line x1="271.13" y1="137.18" x2="273.90" y2="139.47" stroke="#8c8c8c" stroke-width="0.42"/><line x1="270.26" y1="138.18" x2="272.92" y2="140.60" stroke="#8c8c8c" stroke-width="0.42"/><line x1="269.34" y1="139.14" x2="271.89" y2="141.69" stroke="#8c8c8c" stroke-width="0.42"/><line x1="229.88" y1="138.72" x2="226.63" y2="141.97" stroke="#f0f0f0" stroke-width="0.85"/><text x="223.66" y="146.59" font-size="4.6" fill="#c4b898" text-anchor="middle" font-weight="normal" font-family="Liberation Sans">0</text><line x1="223.15" y1="127.73" x2="218.78" y2="129.15" stroke="#f0f0f0" stroke-width="0.85"/><text x="214.78" y="132.10" font-size="4.6" fill="#c4b898" text-anchor="middle" font-weight="normal" font-family="Liberation Sans">10</text><line x1="222.14" y1="114.88" x2="217.60" y2="114.16" stroke="#f0f0f0" stroke-width="0.85"/><text x="213.45" y="115.16" font-size="4.6" fill="#c4b898" text-anchor="middle" font-weight="normal" font-family="Liberation Sans">20</text><line x1="227.07" y1="102.98" x2="223.35" y2="100.27" stroke="#f0f0f0" stroke-width="0.85"/><text x="219.95" y="99.46" font-size="4.6" fill="#c4b898" text-anchor="middle" font-weight="normal" font-family="Liberation Sans">30</text><line x1="236.87" y1="94.61" x2="234.78" y2="90.51" stroke="#f0f0f0" stroke-width="0.85"/><text x="232.87" y="88.42" font-size="4.6" fill="#c4b898" text-anchor="middle" font-weight="normal" font-family="Liberation Sans">40</text><line x1="249.40" y1="91.60" x2="249.40" y2="87.00" stroke="#f0f0f0" stroke-width="0.85"/><text x="249.40" y="84.46" font-size="4.6" fill="#c4b898" text-anchor="middle" font-weight="normal" font-family="Liberation Sans">50</text><line x1="261.93" y1="94.61" x2="264.02" y2="90.51" stroke="#f0f0f0" stroke-width="0.85"/><text x="265.93" y="88.42" font-size="4.6" fill="#c4b898" text-anchor="middle" font-weight="normal" font-family="Liberation Sans">60</text><line x1="271.73" y1="102.98" x2="275.45" y2="100.27" stroke="#f0f0f0" stroke-width="0.85"/><text x="278.85" y="99.46" font-size="4.6" fill="#c4b898" text-anchor="middle" font-weight="normal" font-family="Liberation Sans">70</text><line x1="276.66" y1="114.88" x2="281.20" y2="114.16" stroke="#f0f0f0" stroke-width="0.85"/><text x="285.35" y="115.16" font-size="4.6" fill="#c4b898" text-anchor="middle" font-weight="normal" font-family="Liberation Sans">80</text><line x1="275.65" y1="127.73" x2="280.02" y2="129.15" stroke="#f0f0f0" stroke-width="0.85"/><text x="284.02" y="132.10" font-size="4.6" fill="#c4b898" text-anchor="middle" font-weight="normal" font-family="Liberation Sans">90</text><line x1="268.92" y1="138.72" x2="272.17" y2="141.97" stroke="#f0f0f0" stroke-width="0.85"/><text x="275.14" y="146.59" font-size="4.6" fill="#c4b898" text-anchor="middle" font-weight="normal" font-family="Liberation Sans">100</text><path d="M232.22 136.38A24.3 24.3 0 1 1 268.55 104.24" stroke="#1abc9c" stroke-width="5" fill="none"/><path d="M268.55 104.24A24.3 24.3 0 0 1 273.67 120.47" stroke="#e5e200" stroke-width="5" fill="none"/><path d="M273.67 120.47A24.3 24.3 0 0 1 266.58 136.38" stroke="#f26464" stroke-width="5" fill="none"/><circle cx="249.4" cy="119.2" r="21.9" fill="#656565"/><path d="M248.34 118.14L225.78 142.82L250.46 120.26Z" fill="#f26a6a"/><circle cx="249.4" cy="119.2" r="7.9" fill="#f06464"/><circle cx="249.4" cy="119.2" r="6.6" fill="#d0d0d0"/><text x="249.4" y="121.5" font-size="6.4" fill="#444" text-anchor="middle" font-family="Liberation Sans">0</text><defs><linearGradient id="bez" x1="0" y1="0" x2="0" y2="1"><stop offset="0" stop-color="#f6f6f6"/><stop offset="0.55" stop-color="#d8d8d8"/><stop offset="1" stop-color="#a8a8a8"/></linearGradient></defs><circle cx="341.7" cy="119.2" r="43.6" fill="url(#bez)"/><circle cx="341.7" cy="119.2" r="41" fill="#424242"/><line x1="341.70" y1="82.90" x2="341.70" y2="78.60" stroke="#e6e6e6" stroke-width="1.6"/><line x1="345.73" y1="80.81" x2="345.94" y2="78.82" stroke="#9a9a9a" stroke-width="0.5"/><line x1="349.73" y1="81.44" x2="350.14" y2="79.49" stroke="#9a9a9a" stroke-width="0.5"/><line x1="353.63" y1="82.49" x2="354.25" y2="80.59" stroke="#9a9a9a" stroke-width="0.5"/><line x1="357.40" y1="83.94" x2="358.21" y2="82.11" stroke="#9a9a9a" stroke-width="0.5"/><line x1="359.85" y1="87.76" x2="362.00" y2="84.04" stroke="#e6e6e6" stroke-width="1.0"/><line x1="364.39" y1="87.97" x2="365.56" y2="86.35" stroke="#9a9a9a" stroke-width="0.5"/><line x1="367.53" y1="90.51" x2="368.87" y2="89.03" stroke="#9a9a9a" stroke-width="0.5"/><line x1="370.39" y1="93.37" x2="371.87" y2="92.03" stroke="#9a9a9a" stroke-width="0.5"/><line x1="372.93" y1="96.51" x2="374.55" y2="95.34" stroke="#9a9a9a" stroke-width="0.5"/><line x1="373.14" y1="101.05" x2="376.86" y2="98.90" stroke="#e6e6e6" stroke-width="1.0"/><line x1="376.96" y1="103.50" x2="378.79" y2="102.69" stroke="#9a9a9a" stroke-width="0.5"/><line x1="378.41" y1="107.27" x2="380.31" y2="106.65" stroke="#9a9a9a" stroke-width="0.5"/><line x1="379.46" y1="111.17" x2="381.41" y2="110.76" stroke="#9a9a9a" stroke-width="0.5"/><line x1="380.09" y1="115.17" x2="382.08" y2="114.96" stroke="#9a9a9a" stroke-width="0.5"/><line x1="378.00" y1="119.20" x2="382.30" y2="119.20" stroke="#e6e6e6" stroke-width="1.6"/><line x1="380.09" y1="123.23" x2="382.08" y2="123.44" stroke="#9a9a9a" stroke-width="0.5"/><line x1="379.46" y1="127.23" x2="381.41" y2="127.64" stroke="#9a9a9a" stroke-width="0.5"/><line x1="378.41" y1="131.13" x2="380.31" y2="131.75" stroke="#9a9a9a" stroke-width="0.5"/><line x1="376.96" y1="134.90" x2="378.79" y2="135.71" stroke="#9a9a9a" stroke-width="0.5"/><line x1="373.14" y1="137.35" x2="376.86" y2="139.50" stroke="#e6e6e6" stroke-width="1.0"/><line x1="372.93" y1="141.89" x2="374.55" y2="143.06" stroke="#9a9a9a" stroke-width="0.5"/><line x1="370.39" y1="145.03" x2="371.87" y2="146.37" stroke="#9a9a9a" stroke-width="0.5"/><line x1="367.53" y1="147.89" x2="368.87" y2="149.37" stroke="#9a9a9a" stroke-width="0.5"/><line x1="364.39" y1="150.43" x2="365.56" y2="152.05" stroke="#9a9a9a" stroke-width="0.5"/><line x1="359.85" y1="150.64" x2="362.00" y2="154.36" stroke="#e6e6e6" stroke-width="1.0"/><line x1="357.40" y1="154.46" x2="358.21" y2="156.29" stroke="#9a9a9a" stroke-width="0.5"/><line x1="353.63" y1="155.91" x2="354.25" y2="157.81" stroke="#9a9a9a" stroke-width="0.5"/><line x1="349.73" y1="156.96" x2="350.14" y2="158.91" stroke="#9a9a9a" stroke-width="0.5"/><line x1="345.73" y1="157.59" x2="345.94" y2="159.58" stroke="#9a9a9a" stroke-width="0.5"/><line x1="341.70" y1="155.50" x2="341.70" y2="159.80" stroke="#e6e6e6" stroke-width="1.6"/><line x1="337.67" y1="157.59" x2="337.46" y2="159.58" stroke="#9a9a9a" stroke-width="0.5"/><line x1="333.67" y1="156.96" x2="333.26" y2="158.91" stroke="#9a9a9a" stroke-width="0.5"/><line x1="329.77" y1="155.91" x2="329.15" y2="157.81" stroke="#9a9a9a" stroke-width="0.5"/><line x1="326.00" y1="154.46" x2="325.19" y2="156.29" stroke="#9a9a9a" stroke-width="0.5"/><line x1="323.55" y1="150.64" x2="321.40" y2="154.36" stroke="#e6e6e6" stroke-width="1.0"/><line x1="319.01" y1="150.43" x2="317.84" y2="152.05" stroke="#9a9a9a" stroke-width="0.5"/><line x1="315.87" y1="147.89" x2="314.53" y2="149.37" stroke="#9a9a9a" stroke-width="0.5"/><line x1="313.01" y1="145.03" x2="311.53" y2="146.37" stroke="#9a9a9a" stroke-width="0.5"/><line x1="310.47" y1="141.89" x2="308.85" y2="143.06" stroke="#9a9a9a" stroke-width="0.5"/><line x1="310.26" y1="137.35" x2="306.54" y2="139.50" stroke="#e6e6e6" stroke-width="1.0"/><line x1="306.44" y1="134.90" x2="304.61" y2="135.71" stroke="#9a9a9a" stroke-width="0.5"/><line x1="304.99" y1="131.13" x2="303.09" y2="131.75" stroke="#9a9a9a" stroke-width="0.5"/><line x1="303.94" y1="127.23" x2="301.99" y2="127.64" stroke="#9a9a9a" stroke-width="0.5"/><line x1="303.31" y1="123.23" x2="301.32" y2="123.44" stroke="#9a9a9a" stroke-width="0.5"/><line x1="305.40" y1="119.20" x2="301.10" y2="119.20" stroke="#e6e6e6" stroke-width="1.6"/><line x1="303.31" y1="115.17" x2="301.32" y2="114.96" stroke="#9a9a9a" stroke-width="0.5"/><line x1="303.94" y1="111.17" x2="301.99" y2="110.76" stroke="#9a9a9a" stroke-width="0.5"/><line x1="304.99" y1="107.27" x2="303.09" y2="106.65" stroke="#9a9a9a" stroke-width="0.5"/><line x1="306.44" y1="103.50" x2="304.61" y2="102.69" stroke="#9a9a9a" stroke-width="0.5"/><line x1="310.26" y1="101.05" x2="306.54" y2="98.90" stroke="#e6e6e6" stroke-width="1.0"/><line x1="310.47" y1="96.51" x2="308.85" y2="95.34" stroke="#9a9a9a" stroke-width="0.5"/><line x1="313.01" y1="93.37" x2="311.53" y2="92.03" stroke="#9a9a9a" stroke-width="0.5"/><line x1="315.87" y1="90.51" x2="314.53" y2="89.03" stroke="#9a9a9a" stroke-width="0.5"/><line x1="319.01" y1="87.97" x2="317.84" y2="86.35" stroke="#9a9a9a" stroke-width="0.5"/><line x1="323.55" y1="87.76" x2="321.40" y2="84.04" stroke="#e6e6e6" stroke-width="1.0"/><line x1="326.00" y1="83.94" x2="325.19" y2="82.11" stroke="#9a9a9a" stroke-width="0.5"/><line x1="329.77" y1="82.49" x2="329.15" y2="80.59" stroke="#9a9a9a" stroke-width="0.5"/><line x1="333.67" y1="81.44" x2="333.26" y2="79.49" stroke="#9a9a9a" stroke-width="0.5"/><line x1="337.67" y1="80.81" x2="337.46" y2="78.82" stroke="#9a9a9a" stroke-width="0.5"/><text x="357.45" y="94.01" font-size="5.8" fill="#ddd6c8" text-anchor="middle" font-weight="normal" font-family="Liberation Sans">1</text><text x="368.98" y="105.54" font-size="5.8" fill="#ddd6c8" text-anchor="middle" font-weight="normal" font-family="Liberation Sans">2</text><text x="373.20" y="121.29" font-size="5.8" fill="#ddd6c8" text-anchor="middle" font-weight="normal" font-family="Liberation Sans">3</text><text x="368.98" y="137.04" font-size="5.8" fill="#ddd6c8" text-anchor="middle" font-weight="normal" font-family="Liberation Sans">4</text><text x="357.45" y="148.57" font-size="5.8" fill="#ddd6c8" text-anchor="middle" font-weight="normal" font-family="Liberation Sans">5</text><text x="341.70" y="152.79" font-size="5.8" fill="#ddd6c8" text-anchor="middle" font-weight="normal" font-family="Liberation Sans">6</text><text x="325.95" y="148.57" font-size="5.8" fill="#ddd6c8" text-anchor="middle" font-weight="normal" font-family="Liberation Sans">7</text><text x="314.42" y="137.04" font-size="5.8" fill="#ddd6c8" text-anchor="middle" font-weight="normal" font-family="Liberation Sans">8</text><text x="310.20" y="121.29" font-size="5.8" fill="#ddd6c8" text-anchor="middle" font-weight="normal" font-family="Liberation Sans">9</text><text x="314.42" y="105.54" font-size="5.8" fill="#ddd6c8" text-anchor="middle" font-weight="normal" font-family="Liberation Sans">10</text><text x="325.95" y="94.01" font-size="5.8" fill="#ddd6c8" text-anchor="middle" font-weight="normal" font-family="Liberation Sans">11</text><text x="341.70" y="89.79" font-size="5.8" fill="#ddd6c8" text-anchor="middle" font-weight="normal" font-family="Liberation Sans">12</text><line x1="339.30" y1="121.75" x2="353.90" y2="106.20" stroke="#b4b4b4" stroke-width="2.6" stroke-linecap="round"/><line x1="339.74" y1="116.30" x2="356.60" y2="141.20" stroke="#b8b8b8" stroke-width="1.6" stroke-linecap="round"/><line x1="340.31" y1="117.76" x2="363.40" y2="141.70" stroke="#c0c0c0" stroke-width="0.7" stroke-linecap="round"/><circle cx="341.7" cy="119.2" r="2.1" fill="#e0e0e0"/><defs><linearGradient id="cr" x1="0" y1="0" x2="0" y2="1"><stop offset="0" stop-color="#841a1e"/><stop offset="1" stop-color="#d8484a"/></linearGradient><linearGradient id="cbg" x1="0" y1="0" x2="0" y2="1"><stop offset="0" stop-color="#56667c"/><stop offset="1" stop-color="#1a2028"/></linearGradient><linearGradient id="cmr" x1="0" y1="0" x2="0" y2="1"><stop offset="0" stop-color="#6c819e"/><stop offset="1" stop-color="#34404f"/></linearGradient><linearGradient id="cin" x1="0" y1="0" x2="0" y2="1"><stop offset="0" stop-color="#333d4b"/><stop offset="1" stop-color="#7388a6"/></linearGradient></defs><circle cx="433.9" cy="119.1" r="44.3" fill="url(#cr)"/><circle cx="433.9" cy="119.1" r="39.6" fill="url(#cbg)"/><circle cx="433.9" cy="119.1" r="30.6" fill="url(#cmr)"/><circle cx="433.9" cy="119.1" r="27.4" fill="url(#cin)"/><line x1="456.95" y1="96.05" x2="461.05" y2="91.95" stroke="#f4f4f4" stroke-width="1.3"/><line x1="456.95" y1="142.15" x2="461.05" y2="146.25" stroke="#f4f4f4" stroke-width="1.3"/><line x1="410.85" y1="142.15" x2="406.75" y2="146.25" stroke="#f4f4f4" stroke-width="1.3"/><line x1="410.85" y1="96.05" x2="406.75" y2="91.95" stroke="#f4f4f4" stroke-width="1.3"/><text x="433.90" y="87.49" font-size="7.2" fill="#f2f2f2" text-anchor="middle" font-weight="bold" font-family="Liberation Sans">N</text><text x="469.90" y="121.69" font-size="7.2" fill="#f2f2f2" text-anchor="middle" font-weight="bold" font-family="Liberation Sans">E</text><text x="433.90" y="156.29" font-size="7.2" fill="#f2f2f2" text-anchor="middle" font-weight="bold" font-family="Liberation Sans">S</text><text x="398.40" y="121.69" font-size="7.2" fill="#f2f2f2" text-anchor="middle" font-weight="bold" font-family="Liberation Sans">W</text><path d="M430.29999999999995 119.1L433.9 87.6L437.5 119.1Z" fill="#da6672"/><path d="M433.9 119.1L433.9 87.6L437.5 119.1Z" fill="#c0505c"/><path d="M430.29999999999995 119.1L433.9 149.6L437.5 119.1Z" fill="#5aaae8"/><path d="M433.9 119.1L433.9 149.6L437.5 119.1Z" fill="#4494d4"/><circle cx="433.9" cy="119.1" r="4.6" fill="#e4e4e4"/><circle cx="433.9" cy="119.1" r="3.2" fill="#cfcfcf"/><rect x="433.09999999999997" y="118.0" width="1.6" height="2.2" fill="#555"/>
<defs><linearGradient id="kor" x1="0" y1="0" x2="0" y2="1"><stop offset="0" stop-color="#7a7a7a"/><stop offset="1" stop-color="#e6e6e6"/></linearGradient><linearGradient id="kin" x1="0" y1="0" x2="0" y2="1"><stop offset="0" stop-color="#f4f4f4"/><stop offset="1" stop-color="#767676"/></linearGradient><linearGradient id="kc" x1="0" y1="0" x2="0" y2="1"><stop offset="0" stop-color="#7c7c7c"/><stop offset="1" stop-color="#ececec"/></linearGradient><linearGradient id="ks" x1="0" y1="0" x2="0" y2="1"><stop offset="0" stop-color="#fafafa"/><stop offset="1" stop-color="#b8b8b8"/></linearGradient></defs><line x1="135.54" y1="285.96" x2="132.71" y2="288.79" stroke="#333" stroke-width="0.9"/><text x="129.74" y="293.67" font-size="5.3" fill="#444" text-anchor="middle" font-weight="normal" font-family="Liberation Sans">0</text><line x1="129.46" y1="281.14" x2="127.25" y2="282.50" stroke="#9a9a9a" stroke-width="0.55"/><line x1="126.22" y1="274.10" x2="123.74" y2="274.90" stroke="#9a9a9a" stroke-width="0.55"/><line x1="124.70" y1="266.49" x2="122.11" y2="266.69" stroke="#9a9a9a" stroke-width="0.55"/><line x1="126.78" y1="259.02" x2="122.83" y2="258.39" stroke="#333" stroke-width="0.9"/><text x="118.69" y="259.64" font-size="5.3" fill="#444" text-anchor="middle" font-weight="normal" font-family="Liberation Sans">20</text><line x1="127.11" y1="251.27" x2="124.71" y2="250.28" stroke="#9a9a9a" stroke-width="0.55"/><line x1="130.90" y1="244.50" x2="128.80" y2="242.97" stroke="#9a9a9a" stroke-width="0.55"/><line x1="136.17" y1="238.81" x2="134.48" y2="236.83" stroke="#9a9a9a" stroke-width="0.55"/><line x1="143.44" y1="236.10" x2="141.62" y2="232.54" stroke="#333" stroke-width="0.9"/><text x="139.71" y="230.70" font-size="5.3" fill="#444" text-anchor="middle" font-weight="normal" font-family="Liberation Sans">40</text><line x1="149.90" y1="231.81" x2="149.29" y2="229.28" stroke="#9a9a9a" stroke-width="0.55"/><line x1="157.60" y1="230.90" x2="157.60" y2="228.30" stroke="#9a9a9a" stroke-width="0.55"/><line x1="165.30" y1="231.81" x2="165.91" y2="229.28" stroke="#9a9a9a" stroke-width="0.55"/><line x1="171.76" y1="236.10" x2="173.58" y2="232.54" stroke="#333" stroke-width="0.9"/><text x="175.49" y="230.70" font-size="5.3" fill="#444" text-anchor="middle" font-weight="normal" font-family="Liberation Sans">60</text><line x1="179.03" y1="238.81" x2="180.72" y2="236.83" stroke="#9a9a9a" stroke-width="0.55"/><line x1="184.30" y1="244.50" x2="186.40" y2="242.97" stroke="#9a9a9a" stroke-width="0.55"/><line x1="188.09" y1="251.27" x2="190.49" y2="250.28" stroke="#9a9a9a" stroke-width="0.55"/><line x1="188.42" y1="259.02" x2="192.37" y2="258.39" stroke="#333" stroke-width="0.9"/><text x="196.51" y="259.64" font-size="5.3" fill="#444" text-anchor="middle" font-weight="normal" font-family="Liberation Sans">80</text><line x1="190.50" y1="266.49" x2="193.09" y2="266.69" stroke="#9a9a9a" stroke-width="0.55"/><line x1="188.98" y1="274.10" x2="191.46" y2="274.90" stroke="#9a9a9a" stroke-width="0.55"/><line x1="185.74" y1="281.14" x2="187.95" y2="282.50" stroke="#9a9a9a" stroke-width="0.55"/><line x1="179.66" y1="285.96" x2="182.49" y2="288.79" stroke="#333" stroke-width="0.9"/><text x="185.46" y="293.67" font-size="5.3" fill="#444" text-anchor="middle" font-weight="normal" font-family="Liberation Sans">100</text><circle cx="157.6" cy="263.9" r="30.6" fill="url(#kor)"/><circle cx="157.6" cy="263.9" r="25.8" fill="url(#kin)"/><circle cx="157.2" cy="264.6" r="6.8" fill="url(#kc)"/><text x="157.2" y="266.6" font-size="5.6" font-weight="bold" fill="#222" text-anchor="middle" font-family="Liberation Sans">0</text><circle cx="144.5" cy="277.8" r="6.6" fill="url(#ks)" stroke="#c8c8c8" stroke-width="0.4"/><line x1="141.8" y1="280.4" x2="146" y2="276.6" stroke="#555" stroke-width="0.8"/><defs><linearGradient id="dk" x1="0" y1="0" x2="0" y2="1"><stop offset="0" stop-color="#4c4c4c"/><stop offset="1" stop-color="#2e2e2e"/></linearGradient></defs><circle cx="249.2" cy="264.5" r="44.2" fill="#2c2c2c"/><circle cx="249.2" cy="264.5" r="38.4" fill="#1f1f1f"/><circle cx="249.2" cy="264.5" r="37.2" fill="url(#dk)"/><circle cx="249.3" cy="287.3" r="6.8" fill="#58aff6"/><line x1="318.24" y1="288.76" x2="311.59" y2="295.41" stroke="#333" stroke-width="1.0"/><line x1="317.25" y1="287.72" x2="310.32" y2="294.08" stroke="#333" stroke-width="1.0"/><line x1="316.30" y1="286.64" x2="309.10" y2="292.69" stroke="#333" stroke-width="1.0"/><line x1="315.39" y1="285.52" x2="307.95" y2="291.26" stroke="#333" stroke-width="1.0"/><line x1="314.54" y1="284.36" x2="306.85" y2="289.78" stroke="#333" stroke-width="1.0"/><line x1="313.73" y1="283.17" x2="305.83" y2="288.25" stroke="#333" stroke-width="1.0"/><line x1="312.98" y1="281.94" x2="304.86" y2="286.68" stroke="#333" stroke-width="1.0"/><line x1="312.28" y1="280.68" x2="303.97" y2="285.07" stroke="#333" stroke-width="1.0"/><line x1="311.64" y1="279.39" x2="303.14" y2="283.42" stroke="#333" stroke-width="1.0"/><line x1="311.05" y1="278.08" x2="302.39" y2="281.74" stroke="#333" stroke-width="1.0"/><line x1="310.52" y1="276.74" x2="301.71" y2="280.03" stroke="#333" stroke-width="1.0"/><line x1="310.04" y1="275.38" x2="301.10" y2="278.29" stroke="#333" stroke-width="1.0"/><line x1="309.63" y1="274.00" x2="300.57" y2="276.52" stroke="#333" stroke-width="1.0"/><line x1="309.27" y1="272.61" x2="300.12" y2="274.74" stroke="#333" stroke-width="1.0"/><line x1="308.98" y1="271.20" x2="299.74" y2="272.94" stroke="#333" stroke-width="1.0"/><line x1="308.74" y1="269.78" x2="299.44" y2="271.12" stroke="#333" stroke-width="1.0"/><line x1="308.57" y1="268.35" x2="299.21" y2="269.29" stroke="#333" stroke-width="1.0"/><line x1="308.45" y1="266.92" x2="299.07" y2="267.45" stroke="#333" stroke-width="1.0"/><line x1="308.40" y1="265.48" x2="299.00" y2="265.61" stroke="#333" stroke-width="1.0"/><line x1="308.41" y1="264.04" x2="299.02" y2="263.77" stroke="#333" stroke-width="1.0"/><line x1="308.49" y1="262.60" x2="299.11" y2="261.93" stroke="#333" stroke-width="1.0"/><line x1="308.62" y1="261.17" x2="299.28" y2="260.10" stroke="#333" stroke-width="1.0"/><line x1="308.81" y1="259.74" x2="299.53" y2="258.27" stroke="#333" stroke-width="1.0"/><line x1="309.07" y1="258.33" x2="299.86" y2="256.46" stroke="#333" stroke-width="1.0"/><line x1="309.39" y1="256.92" x2="300.26" y2="254.66" stroke="#333" stroke-width="1.0"/><line x1="309.76" y1="255.53" x2="300.74" y2="252.89" stroke="#333" stroke-width="1.0"/><line x1="310.20" y1="254.16" x2="301.30" y2="251.13" stroke="#333" stroke-width="1.0"/><line x1="310.69" y1="252.81" x2="301.93" y2="249.40" stroke="#333" stroke-width="1.0"/><line x1="311.24" y1="251.48" x2="302.63" y2="247.70" stroke="#333" stroke-width="1.0"/><line x1="311.85" y1="250.17" x2="303.41" y2="246.03" stroke="#333" stroke-width="1.0"/><line x1="312.51" y1="248.90" x2="304.26" y2="244.39" stroke="#333" stroke-width="1.0"/><line x1="313.23" y1="247.65" x2="305.18" y2="242.79" stroke="#333" stroke-width="1.0"/><line x1="314.00" y1="246.43" x2="306.16" y2="241.24" stroke="#333" stroke-width="1.0"/><line x1="314.82" y1="245.25" x2="307.21" y2="239.73" stroke="#333" stroke-width="1.0"/><line x1="315.69" y1="244.10" x2="308.33" y2="238.26" stroke="#333" stroke-width="1.0"/><line x1="316.61" y1="243.00" x2="309.50" y2="236.84" stroke="#333" stroke-width="1.0"/><line x1="317.57" y1="241.93" x2="310.74" y2="235.48" stroke="#333" stroke-width="1.0"/><line x1="318.58" y1="240.90" x2="312.03" y2="234.16" stroke="#333" stroke-width="1.0"/><line x1="319.64" y1="239.92" x2="313.38" y2="232.91" stroke="#333" stroke-width="1.0"/><line x1="320.73" y1="238.99" x2="314.78" y2="231.71" stroke="#333" stroke-width="1.0"/><line x1="321.86" y1="238.10" x2="316.23" y2="230.58" stroke="#333" stroke-width="1.0"/><line x1="323.03" y1="237.26" x2="317.73" y2="229.50" stroke="#333" stroke-width="1.0"/><line x1="324.24" y1="236.48" x2="319.27" y2="228.50" stroke="#333" stroke-width="1.0"/><line x1="325.48" y1="235.74" x2="320.86" y2="227.56" stroke="#333" stroke-width="1.0"/><line x1="326.75" y1="235.06" x2="322.48" y2="226.69" stroke="#333" stroke-width="1.0"/><line x1="328.04" y1="234.44" x2="324.14" y2="225.89" stroke="#333" stroke-width="1.0"/><line x1="329.36" y1="233.87" x2="325.83" y2="225.16" stroke="#333" stroke-width="1.0"/><line x1="330.71" y1="233.35" x2="327.55" y2="224.50" stroke="#333" stroke-width="1.0"/><line x1="332.07" y1="232.90" x2="329.30" y2="223.92" stroke="#333" stroke-width="1.0"/><line x1="333.46" y1="232.50" x2="331.07" y2="223.41" stroke="#333" stroke-width="1.0"/><line x1="334.86" y1="232.17" x2="332.86" y2="222.98" stroke="#333" stroke-width="1.0"/><line x1="336.27" y1="231.89" x2="334.67" y2="222.63" stroke="#333" stroke-width="1.0"/><line x1="337.69" y1="231.68" x2="336.49" y2="222.35" stroke="#333" stroke-width="1.0"/><line x1="339.12" y1="231.52" x2="338.32" y2="222.16" stroke="#333" stroke-width="1.0"/><line x1="340.56" y1="231.43" x2="340.16" y2="222.04" stroke="#333" stroke-width="1.0"/><line x1="342.00" y1="231.40" x2="342.00" y2="222.00" stroke="#333" stroke-width="1.0"/><line x1="343.44" y1="231.43" x2="343.84" y2="222.04" stroke="#333" stroke-width="1.0"/><line x1="344.88" y1="231.52" x2="345.68" y2="222.16" stroke="#333" stroke-width="1.0"/><line x1="346.31" y1="231.68" x2="347.51" y2="222.35" stroke="#333" stroke-width="1.0"/><line x1="347.73" y1="231.89" x2="349.33" y2="222.63" stroke="#333" stroke-width="1.0"/><line x1="349.14" y1="232.17" x2="351.14" y2="222.98" stroke="#333" stroke-width="1.0"/><line x1="350.54" y1="232.50" x2="352.93" y2="223.41" stroke="#333" stroke-width="1.0"/><line x1="351.93" y1="232.90" x2="354.70" y2="223.92" stroke="#333" stroke-width="1.0"/><line x1="353.29" y1="233.35" x2="356.45" y2="224.50" stroke="#333" stroke-width="1.0"/><line x1="354.64" y1="233.87" x2="358.17" y2="225.16" stroke="#333" stroke-width="1.0"/><line x1="355.96" y1="234.44" x2="359.86" y2="225.89" stroke="#333" stroke-width="1.0"/><line x1="357.25" y1="235.06" x2="361.52" y2="226.69" stroke="#333" stroke-width="1.0"/><line x1="358.52" y1="235.74" x2="363.14" y2="227.56" stroke="#333" stroke-width="1.0"/><line x1="359.76" y1="236.48" x2="364.73" y2="228.50" stroke="#333" stroke-width="1.0"/><line x1="360.97" y1="237.26" x2="366.27" y2="229.50" stroke="#333" stroke-width="1.0"/><line x1="362.14" y1="238.10" x2="367.77" y2="230.58" stroke="#333" stroke-width="1.0"/><line x1="363.27" y1="238.99" x2="369.22" y2="231.71" stroke="#333" stroke-width="1.0"/><line x1="364.36" y1="239.92" x2="370.62" y2="232.91" stroke="#333" stroke-width="1.0"/><line x1="365.42" y1="240.90" x2="371.97" y2="234.16" stroke="#333" stroke-width="1.0"/><line x1="366.43" y1="241.93" x2="373.26" y2="235.48" stroke="#333" stroke-width="1.0"/><line x1="367.39" y1="243.00" x2="374.50" y2="236.84" stroke="#333" stroke-width="1.0"/><line x1="368.31" y1="244.10" x2="375.67" y2="238.26" stroke="#333" stroke-width="1.0"/><line x1="369.18" y1="245.25" x2="376.79" y2="239.73" stroke="#333" stroke-width="1.0"/><line x1="370.00" y1="246.43" x2="377.84" y2="241.24" stroke="#333" stroke-width="1.0"/><line x1="370.77" y1="247.65" x2="378.82" y2="242.79" stroke="#333" stroke-width="1.0"/><line x1="371.49" y1="248.90" x2="379.74" y2="244.39" stroke="#333" stroke-width="1.0"/><line x1="372.15" y1="250.17" x2="380.59" y2="246.03" stroke="#333" stroke-width="1.0"/><line x1="372.76" y1="251.48" x2="381.37" y2="247.70" stroke="#333" stroke-width="1.0"/><line x1="373.31" y1="252.81" x2="382.07" y2="249.40" stroke="#333" stroke-width="1.0"/><line x1="373.80" y1="254.16" x2="382.70" y2="251.13" stroke="#333" stroke-width="1.0"/><line x1="374.24" y1="255.53" x2="383.26" y2="252.89" stroke="#333" stroke-width="1.0"/><line x1="374.61" y1="256.92" x2="383.74" y2="254.66" stroke="#333" stroke-width="1.0"/><line x1="374.93" y1="258.33" x2="384.14" y2="256.46" stroke="#333" stroke-width="1.0"/><line x1="375.19" y1="259.74" x2="384.47" y2="258.27" stroke="#333" stroke-width="1.0"/><line x1="375.38" y1="261.17" x2="384.72" y2="260.10" stroke="#333" stroke-width="1.0"/><line x1="375.51" y1="262.60" x2="384.89" y2="261.93" stroke="#333" stroke-width="1.0"/><line x1="375.59" y1="264.04" x2="384.98" y2="263.77" stroke="#333" stroke-width="1.0"/><line x1="375.60" y1="265.48" x2="385.00" y2="265.61" stroke="#333" stroke-width="1.0"/><line x1="375.55" y1="266.92" x2="384.93" y2="267.45" stroke="#333" stroke-width="1.0"/><line x1="375.43" y1="268.35" x2="384.79" y2="269.29" stroke="#333" stroke-width="1.0"/><line x1="375.26" y1="269.78" x2="384.56" y2="271.12" stroke="#333" stroke-width="1.0"/><line x1="375.02" y1="271.20" x2="384.26" y2="272.94" stroke="#333" stroke-width="1.0"/><line x1="374.73" y1="272.61" x2="383.88" y2="274.74" stroke="#333" stroke-width="1.0"/><line x1="374.37" y1="274.00" x2="383.43" y2="276.52" stroke="#333" stroke-width="1.0"/><line x1="373.96" y1="275.38" x2="382.90" y2="278.29" stroke="#333" stroke-width="1.0"/><line x1="373.48" y1="276.74" x2="382.29" y2="280.03" stroke="#333" stroke-width="1.0"/><line x1="372.95" y1="278.08" x2="381.61" y2="281.74" stroke="#333" stroke-width="1.0"/><line x1="372.36" y1="279.39" x2="380.86" y2="283.42" stroke="#333" stroke-width="1.0"/><line x1="371.72" y1="280.68" x2="380.03" y2="285.07" stroke="#333" stroke-width="1.0"/><line x1="371.02" y1="281.94" x2="379.14" y2="286.68" stroke="#333" stroke-width="1.0"/><line x1="370.27" y1="283.17" x2="378.17" y2="288.25" stroke="#333" stroke-width="1.0"/><line x1="369.46" y1="284.36" x2="377.15" y2="289.78" stroke="#333" stroke-width="1.0"/><line x1="368.61" y1="285.52" x2="376.05" y2="291.26" stroke="#333" stroke-width="1.0"/><line x1="367.70" y1="286.64" x2="374.90" y2="292.69" stroke="#333" stroke-width="1.0"/><line x1="366.75" y1="287.72" x2="373.68" y2="294.08" stroke="#333" stroke-width="1.0"/><line x1="365.76" y1="288.76" x2="372.41" y2="295.41" stroke="#333" stroke-width="1.0"/><circle cx="342" cy="265" r="31.6" fill="#e6e6e6"/><defs><linearGradient id="gr" x1="0" y1="0" x2="0" y2="1"><stop offset="0" stop-color="#2ecc71"/><stop offset="1" stop-color="#29b47a"/></linearGradient></defs><circle cx="342" cy="265" r="22.3" fill="url(#gr)"/><circle cx="342" cy="265" r="13.4" fill="#efefef"/><text x="342" y="268.2" font-size="9" fill="#4a90d9" text-anchor="middle" font-family="Liberation Sans">0</text><text x="323.3" y="301" font-size="5.2" fill="#a0a0a0" text-anchor="middle" font-family="Liberation Sans">0</text><text x="360.5" y="301" font-size="5.2" fill="#a0a0a0" text-anchor="middle" font-family="Liberation Sans">100</text><path d="M404.30 294.30A42 42 0 1 1 463.70 294.30" stroke="#5f5f5f" stroke-width="4.3" fill="none"/><path d="M411.80 286.80A31.4 31.4 0 1 1 456.20 286.80" stroke="#d4d4d4" stroke-width="0.6" fill="none"/><line x1="413.49" y1="285.11" x2="411.80" y2="286.80" stroke="#c8c8c8" stroke-width="0.45"/><line x1="412.55" y1="284.12" x2="410.78" y2="285.73" stroke="#c8c8c8" stroke-width="0.45"/><line x1="411.66" y1="283.09" x2="409.81" y2="284.62" stroke="#c8c8c8" stroke-width="0.45"/><line x1="410.81" y1="282.01" x2="408.89" y2="283.45" stroke="#c8c8c8" stroke-width="0.45"/><line x1="410.01" y1="280.90" x2="408.03" y2="282.25" stroke="#c8c8c8" stroke-width="0.45"/><line x1="409.27" y1="279.75" x2="407.23" y2="281.01" stroke="#c8c8c8" stroke-width="0.45"/><line x1="408.59" y1="278.57" x2="406.48" y2="279.73" stroke="#c8c8c8" stroke-width="0.45"/><line x1="407.96" y1="277.36" x2="405.80" y2="278.41" stroke="#c8c8c8" stroke-width="0.45"/><line x1="407.39" y1="276.12" x2="405.18" y2="277.07" stroke="#c8c8c8" stroke-width="0.45"/><line x1="406.87" y1="274.85" x2="404.63" y2="275.70" stroke="#c8c8c8" stroke-width="0.45"/><line x1="406.42" y1="273.56" x2="404.14" y2="274.30" stroke="#c8c8c8" stroke-width="0.45"/><line x1="406.03" y1="272.25" x2="403.71" y2="272.89" stroke="#c8c8c8" stroke-width="0.45"/><line x1="405.70" y1="270.93" x2="403.36" y2="271.45" stroke="#c8c8c8" stroke-width="0.45"/><line x1="405.43" y1="269.59" x2="403.07" y2="270.00" stroke="#c8c8c8" stroke-width="0.45"/><line x1="405.23" y1="268.23" x2="402.85" y2="268.54" stroke="#c8c8c8" stroke-width="0.45"/><line x1="405.09" y1="266.88" x2="402.70" y2="267.06" stroke="#c8c8c8" stroke-width="0.45"/><line x1="405.01" y1="265.51" x2="402.62" y2="265.59" stroke="#c8c8c8" stroke-width="0.45"/><line x1="405.00" y1="264.14" x2="402.60" y2="264.11" stroke="#c8c8c8" stroke-width="0.45"/><line x1="405.06" y1="262.78" x2="402.66" y2="262.63" stroke="#c8c8c8" stroke-width="0.45"/><line x1="405.18" y1="261.42" x2="402.79" y2="261.15" stroke="#c8c8c8" stroke-width="0.45"/><line x1="405.36" y1="260.06" x2="402.99" y2="259.69" stroke="#c8c8c8" stroke-width="0.45"/><line x1="405.60" y1="258.72" x2="403.25" y2="258.23" stroke="#c8c8c8" stroke-width="0.45"/><line x1="405.91" y1="257.39" x2="403.59" y2="256.79" stroke="#c8c8c8" stroke-width="0.45"/><line x1="406.28" y1="256.07" x2="403.99" y2="255.37" stroke="#c8c8c8" stroke-width="0.45"/><line x1="406.71" y1="254.78" x2="404.46" y2="253.96" stroke="#c8c8c8" stroke-width="0.45"/><line x1="407.21" y1="253.50" x2="404.99" y2="252.58" stroke="#c8c8c8" stroke-width="0.45"/><line x1="407.76" y1="252.25" x2="405.59" y2="251.23" stroke="#c8c8c8" stroke-width="0.45"/><line x1="408.37" y1="251.03" x2="406.25" y2="249.91" stroke="#c8c8c8" stroke-width="0.45"/><line x1="409.04" y1="249.84" x2="406.97" y2="248.62" stroke="#c8c8c8" stroke-width="0.45"/><line x1="409.76" y1="248.68" x2="407.76" y2="247.36" stroke="#c8c8c8" stroke-width="0.45"/><line x1="410.54" y1="247.55" x2="408.60" y2="246.14" stroke="#c8c8c8" stroke-width="0.45"/><line x1="411.37" y1="246.47" x2="409.49" y2="244.97" stroke="#c8c8c8" stroke-width="0.45"/><line x1="412.25" y1="245.42" x2="410.45" y2="243.83" stroke="#c8c8c8" stroke-width="0.45"/><line x1="413.17" y1="244.42" x2="411.45" y2="242.75" stroke="#c8c8c8" stroke-width="0.45"/><line x1="414.15" y1="243.46" x2="412.51" y2="241.71" stroke="#c8c8c8" stroke-width="0.45"/><line x1="415.17" y1="242.55" x2="413.61" y2="240.72" stroke="#c8c8c8" stroke-width="0.45"/><line x1="416.23" y1="241.69" x2="414.75" y2="239.79" stroke="#c8c8c8" stroke-width="0.45"/><line x1="417.32" y1="240.87" x2="415.94" y2="238.91" stroke="#c8c8c8" stroke-width="0.45"/><line x1="418.46" y1="240.11" x2="417.18" y2="238.09" stroke="#c8c8c8" stroke-width="0.45"/><line x1="419.63" y1="239.41" x2="418.44" y2="237.32" stroke="#c8c8c8" stroke-width="0.45"/><line x1="420.83" y1="238.76" x2="419.74" y2="236.62" stroke="#c8c8c8" stroke-width="0.45"/><line x1="422.07" y1="238.17" x2="421.08" y2="235.98" stroke="#c8c8c8" stroke-width="0.45"/><line x1="423.32" y1="237.64" x2="422.44" y2="235.41" stroke="#c8c8c8" stroke-width="0.45"/><line x1="424.61" y1="237.16" x2="423.83" y2="234.89" stroke="#c8c8c8" stroke-width="0.45"/><line x1="425.91" y1="236.75" x2="425.24" y2="234.45" stroke="#c8c8c8" stroke-width="0.45"/><line x1="427.23" y1="236.40" x2="426.67" y2="234.07" stroke="#c8c8c8" stroke-width="0.45"/><line x1="428.57" y1="236.11" x2="428.12" y2="233.76" stroke="#c8c8c8" stroke-width="0.45"/><line x1="429.91" y1="235.89" x2="429.58" y2="233.51" stroke="#c8c8c8" stroke-width="0.45"/><line x1="431.27" y1="235.73" x2="431.04" y2="233.34" stroke="#c8c8c8" stroke-width="0.45"/><line x1="432.63" y1="235.63" x2="432.52" y2="233.23" stroke="#c8c8c8" stroke-width="0.45"/><line x1="434.00" y1="235.60" x2="434.00" y2="233.20" stroke="#c8c8c8" stroke-width="0.45"/><line x1="435.37" y1="235.63" x2="435.48" y2="233.23" stroke="#c8c8c8" stroke-width="0.45"/><line x1="436.73" y1="235.73" x2="436.96" y2="233.34" stroke="#c8c8c8" stroke-width="0.45"/><line x1="438.09" y1="235.89" x2="438.42" y2="233.51" stroke="#c8c8c8" stroke-width="0.45"/><line x1="439.43" y1="236.11" x2="439.88" y2="233.76" stroke="#c8c8c8" stroke-width="0.45"/><line x1="440.77" y1="236.40" x2="441.33" y2="234.07" stroke="#c8c8c8" stroke-width="0.45"/><line x1="442.09" y1="236.75" x2="442.76" y2="234.45" stroke="#c8c8c8" stroke-width="0.45"/><line x1="443.39" y1="237.16" x2="444.17" y2="234.89" stroke="#c8c8c8" stroke-width="0.45"/><line x1="444.68" y1="237.64" x2="445.56" y2="235.41" stroke="#c8c8c8" stroke-width="0.45"/><line x1="445.93" y1="238.17" x2="446.92" y2="235.98" stroke="#c8c8c8" stroke-width="0.45"/><line x1="447.17" y1="238.76" x2="448.26" y2="236.62" stroke="#c8c8c8" stroke-width="0.45"/><line x1="448.37" y1="239.41" x2="449.56" y2="237.32" stroke="#c8c8c8" stroke-width="0.45"/><line x1="449.54" y1="240.11" x2="450.82" y2="238.09" stroke="#c8c8c8" stroke-width="0.45"/><line x1="450.68" y1="240.87" x2="452.06" y2="238.91" stroke="#c8c8c8" stroke-width="0.45"/><line x1="451.77" y1="241.69" x2="453.25" y2="239.79" stroke="#c8c8c8" stroke-width="0.45"/><line x1="452.83" y1="242.55" x2="454.39" y2="240.72" stroke="#c8c8c8" stroke-width="0.45"/><line x1="453.85" y1="243.46" x2="455.49" y2="241.71" stroke="#c8c8c8" stroke-width="0.45"/><line x1="454.83" y1="244.42" x2="456.55" y2="242.75" stroke="#c8c8c8" stroke-width="0.45"/><line x1="455.75" y1="245.42" x2="457.55" y2="243.83" stroke="#c8c8c8" stroke-width="0.45"/><line x1="456.63" y1="246.47" x2="458.51" y2="244.97" stroke="#c8c8c8" stroke-width="0.45"/><line x1="457.46" y1="247.55" x2="459.40" y2="246.14" stroke="#c8c8c8" stroke-width="0.45"/><line x1="458.24" y1="248.68" x2="460.24" y2="247.36" stroke="#c8c8c8" stroke-width="0.45"/><line x1="458.96" y1="249.84" x2="461.03" y2="248.62" stroke="#c8c8c8" stroke-width="0.45"/><line x1="459.63" y1="251.03" x2="461.75" y2="249.91" stroke="#c8c8c8" stroke-width="0.45"/><line x1="460.24" y1="252.25" x2="462.41" y2="251.23" stroke="#c8c8c8" stroke-width="0.45"/><line x1="460.79" y1="253.50" x2="463.01" y2="252.58" stroke="#c8c8c8" stroke-width="0.45"/><line x1="461.29" y1="254.78" x2="463.54" y2="253.96" stroke="#c8c8c8" stroke-width="0.45"/><line x1="461.72" y1="256.07" x2="464.01" y2="255.37" stroke="#c8c8c8" stroke-width="0.45"/><line x1="462.09" y1="257.39" x2="464.41" y2="256.79" stroke="#c8c8c8" stroke-width="0.45"/><line x1="462.40" y1="258.72" x2="464.75" y2="258.23" stroke="#c8c8c8" stroke-width="0.45"/><line x1="462.64" y1="260.06" x2="465.01" y2="259.69" stroke="#c8c8c8" stroke-width="0.45"/><line x1="462.82" y1="261.42" x2="465.21" y2="261.15" stroke="#c8c8c8" stroke-width="0.45"/><line x1="462.94" y1="262.78" x2="465.34" y2="262.63" stroke="#c8c8c8" stroke-width="0.45"/><line x1="463.00" y1="264.14" x2="465.40" y2="264.11" stroke="#c8c8c8" stroke-width="0.45"/><line x1="462.99" y1="265.51" x2="465.38" y2="265.59" stroke="#c8c8c8" stroke-width="0.45"/><line x1="462.91" y1="266.88" x2="465.30" y2="267.06" stroke="#c8c8c8" stroke-width="0.45"/><line x1="462.77" y1="268.23" x2="465.15" y2="268.54" stroke="#c8c8c8" stroke-width="0.45"/><line x1="462.57" y1="269.59" x2="464.93" y2="270.00" stroke="#c8c8c8" stroke-width="0.45"/><line x1="462.30" y1="270.93" x2="464.64" y2="271.45" stroke="#c8c8c8" stroke-width="0.45"/><line x1="461.97" y1="272.25" x2="464.29" y2="272.89" stroke="#c8c8c8" stroke-width="0.45"/><line x1="461.58" y1="273.56" x2="463.86" y2="274.30" stroke="#c8c8c8" stroke-width="0.45"/><line x1="461.13" y1="274.85" x2="463.37" y2="275.70" stroke="#c8c8c8" stroke-width="0.45"/><line x1="460.61" y1="276.12" x2="462.82" y2="277.07" stroke="#c8c8c8" stroke-width="0.45"/><line x1="460.04" y1="277.36" x2="462.20" y2="278.41" stroke="#c8c8c8" stroke-width="0.45"/><line x1="459.41" y1="278.57" x2="461.52" y2="279.73" stroke="#c8c8c8" stroke-width="0.45"/><line x1="458.73" y1="279.75" x2="460.77" y2="281.01" stroke="#c8c8c8" stroke-width="0.45"/><line x1="457.99" y1="280.90" x2="459.97" y2="282.25" stroke="#c8c8c8" stroke-width="0.45"/><line x1="457.19" y1="282.01" x2="459.11" y2="283.45" stroke="#c8c8c8" stroke-width="0.45"/><line x1="456.34" y1="283.09" x2="458.19" y2="284.62" stroke="#c8c8c8" stroke-width="0.45"/><line x1="455.45" y1="284.12" x2="457.22" y2="285.73" stroke="#c8c8c8" stroke-width="0.45"/><line x1="454.51" y1="285.11" x2="456.20" y2="286.80" stroke="#c8c8c8" stroke-width="0.45"/><line x1="414.55" y1="284.05" x2="411.51" y2="287.09" stroke="#333" stroke-width="0.75"/><text x="408.26" y="292.07" font-size="4.8" fill="#555" text-anchor="middle" font-weight="normal" font-family="Liberation Sans">0</text><line x1="407.85" y1="273.10" x2="403.76" y2="274.43" stroke="#333" stroke-width="0.75"/><text x="399.38" y="277.58" font-size="4.8" fill="#555" text-anchor="middle" font-weight="normal" font-family="Liberation Sans">10</text><line x1="406.84" y1="260.30" x2="402.59" y2="259.63" stroke="#333" stroke-width="0.75"/><text x="398.05" y="260.63" font-size="4.8" fill="#555" text-anchor="middle" font-weight="normal" font-family="Liberation Sans">20</text><line x1="411.75" y1="248.44" x2="408.27" y2="245.91" stroke="#333" stroke-width="0.75"/><text x="404.55" y="244.93" font-size="4.8" fill="#555" text-anchor="middle" font-weight="normal" font-family="Liberation Sans">30</text><line x1="421.52" y1="240.10" x2="419.56" y2="236.27" stroke="#333" stroke-width="0.75"/><text x="417.47" y="233.90" font-size="4.8" fill="#555" text-anchor="middle" font-weight="normal" font-family="Liberation Sans">40</text><line x1="434.00" y1="237.10" x2="434.00" y2="232.80" stroke="#333" stroke-width="0.75"/><text x="434.00" y="229.93" font-size="4.8" fill="#555" text-anchor="middle" font-weight="normal" font-family="Liberation Sans">50</text><line x1="446.48" y1="240.10" x2="448.44" y2="236.27" stroke="#333" stroke-width="0.75"/><text x="450.53" y="233.90" font-size="4.8" fill="#555" text-anchor="middle" font-weight="normal" font-family="Liberation Sans">60</text><line x1="456.25" y1="248.44" x2="459.73" y2="245.91" stroke="#333" stroke-width="0.75"/><text x="463.45" y="244.93" font-size="4.8" fill="#555" text-anchor="middle" font-weight="normal" font-family="Liberation Sans">70</text><line x1="461.16" y1="260.30" x2="465.41" y2="259.63" stroke="#333" stroke-width="0.75"/><text x="469.95" y="260.63" font-size="4.8" fill="#555" text-anchor="middle" font-weight="normal" font-family="Liberation Sans">80</text><line x1="460.15" y1="273.10" x2="464.24" y2="274.43" stroke="#333" stroke-width="0.75"/><text x="468.62" y="277.58" font-size="4.8" fill="#555" text-anchor="middle" font-weight="normal" font-family="Liberation Sans">90</text><line x1="453.45" y1="284.05" x2="456.49" y2="287.09" stroke="#333" stroke-width="0.75"/><text x="459.74" y="292.07" font-size="4.8" fill="#555" text-anchor="middle" font-weight="normal" font-family="Liberation Sans">100</text><path d="M432.59 263.19L411.37 287.23L435.41 266.01Z" fill="#f87272"/><circle cx="434" cy="264.6" r="8.8" fill="#fa9a9a" opacity="0.7"/><circle cx="434" cy="264.6" r="7.7" fill="#f86868"/><text x="434" y="266.6" font-size="5.6" fill="#ffe0e0" text-anchor="middle" font-family="Liberation Sans">0</text><rect x="203.4" y="46.4" width="3" height="3" rx="1" fill="#e4e4cc" stroke="#5252f2" stroke-width="1"/><rect x="203.3" y="117.60000000000001" width="3.2" height="3.2" fill="#1c1c8c" stroke="#3434d8" stroke-width="0.7"/><rect x="203.4" y="189.5" width="3" height="3" rx="1" fill="#e4e4cc" stroke="#5252f2" stroke-width="1"/><rect x="247.9" y="46.3" width="3.2" height="3.2" fill="#1c1c8c" stroke="#3434d8" stroke-width="0.7"/><rect x="247.9" y="189.4" width="3.2" height="3.2" fill="#1c1c8c" stroke="#3434d8" stroke-width="0.7"/><rect x="292.8" y="46.4" width="3" height="3" rx="1" fill="#e4e4cc" stroke="#5252f2" stroke-width="1"/><rect x="292.7" y="117.60000000000001" width="3.2" height="3.2" fill="#1c1c8c" stroke="#3434d8" stroke-width="0.7"/><rect x="292.8" y="189.5" width="3" height="3" rx="1" fill="#e4e4cc" stroke="#5252f2" stroke-width="1"/>
</svg>
<div style="position:absolute;left:507px;top:38px;width:93px;height:399px;background:#fff;"></div>
<div style="position:absolute;left:506.9px;top:38px;width:1.1px;height:399px;background:#404040;"></div>
<div style="position:absolute;left:508px;top:38px;width:92px;height:13.6px;background:linear-gradient(#fafafa,#eeeeee);border-bottom:1px solid #cfcfcf;"></div>
<div style="position:absolute;left:572.6px;top:38px;width:1px;height:13.6px;background:#d8d8d8;"></div>
<div class="t" style="left:510px;top:41.6px;font-size:7.5px;color:#2a5c9e;-webkit-text-stroke:0.1px #2a5c9e;">对象</div>
<div class="t" style="left:575.5px;top:41.6px;font-size:7.5px;color:#2a5c9e;-webkit-text-stroke:0.1px #2a5c9e;">类</div>
<div style="position:absolute;left:508px;top:51.6px;width:92px;height:9.7px;background:#fff;"></div>
<svg style="position:absolute;left:510.5px;top:53.8px" width="6" height="5" viewBox="0 0 6 5"><path d="M0.5 0.5H5.5L3 4.5Z" fill="#444"/></svg>
<svg style="position:absolute;left:519.5px;top:52.5px" width="8" height="8" viewBox="0 0 8 8"><rect x="0.4" y="0.4" width="1.1" height="1.1" fill="#5068a8"/><rect x="0.4" y="2.4" width="1.1" height="1.1" fill="#5068a8"/><rect x="0.4" y="4.4" width="1.1" height="1.1" fill="#5068a8"/><rect x="0.4" y="6.4" width="1.1" height="1.1" fill="#5068a8"/><rect x="2.4" y="0.4" width="1.1" height="1.1" fill="#5068a8"/><rect x="2.4" y="2.4" width="1.1" height="1.1" fill="#5068a8"/><rect x="2.4" y="4.4" width="1.1" height="1.1" fill="#5068a8"/><rect x="2.4" y="6.4" width="1.1" height="1.1" fill="#5068a8"/><rect x="4.4" y="0.4" width="1.1" height="1.1" fill="#5068a8"/><rect x="4.4" y="2.4" width="1.1" height="1.1" fill="#5068a8"/><rect x="4.4" y="4.4" width="1.1" height="1.1" fill="#5068a8"/><rect x="4.4" y="6.4" width="1.1" height="1.1" fill="#5068a8"/><rect x="6.4" y="0.4" width="1.1" height="1.1" fill="#5068a8"/><rect x="6.4" y="2.4" width="1.1" height="1.1" fill="#5068a8"/><rect x="6.4" y="4.4" width="1.1" height="1.1" fill="#5068a8"/><rect x="6.4" y="6.4" width="1.1" height="1.1" fill="#5068a8"/></svg>
<div style="position:absolute;left:508px;top:61.3px;width:92px;height:8.5px;background:#f2f2f2;"></div>
<div style="position:absolute;left:508px;top:69.8px;width:92px;height:8.5px;background:#e2e2e2;"></div>
<div style="position:absolute;left:508px;top:78.3px;width:92px;height:8.5px;background:#f2f2f2;"></div>
<div style="position:absolute;left:508px;top:86.8px;width:92px;height:8.5px;background:#fff;"></div>
<div style="position:absolute;left:508px;top:95.3px;width:92px;height:8.5px;background:#f2f2f2;"></div>
<div style="position:absolute;left:508px;top:103.8px;width:92px;height:8.5px;background:#fff;"></div>
<div style="position:absolute;left:508px;top:112.3px;width:92px;height:8.5px;background:#f2f2f2;"></div>
<div style="position:absolute;left:508px;top:120.8px;width:92px;height:8.5px;background:#fff;"></div>
<div class="t" style="left:529.5px;top:62.3px;font-size:7.6px;color:#444;transform:scaleY(1.1);transform-origin:0 100%;">gaugeArc</div>
<svg style="position:absolute;left:574.5px;top:61.599999999999994px" width="8" height="8" viewBox="0 0 8 8"><circle cx="4" cy="4" r="3.2" fill="#fff" stroke="#222" stroke-width="1.1"/><path d="M4 4.3L5.6 2.6" stroke="#222" stroke-width="0.7"/></svg>
<div class="t" style="left:586px;top:62.3px;font-size:7.6px;color:#444;transform:scaleY(1.1);transform-origin:0 100%;">Gaug</div>
<div class="t" style="left:529.5px;top:70.8px;font-size:7.6px;color:#444;transform:scaleY(1.1);transform-origin:0 100%;">gaugeCar</div>
<svg style="position:absolute;left:574.5px;top:70.1px" width="8" height="8" viewBox="0 0 8 8"><path d="M0.2 7A3.8 3.8 0 0 1 7.8 7Z" fill="#2e5c78"/><path d="M4 6.6L6 3.8" stroke="#9ac" stroke-width="0.6"/></svg>
<div class="t" style="left:586px;top:70.8px;font-size:7.6px;color:#444;transform:scaleY(1.1);transform-origin:0 100%;">Gaug</div>
<div class="t" style="left:529.5px;top:79.3px;font-size:7.6px;color:#444;transform:scaleY(1.1);transform-origin:0 100%;">gaugeClock</div>
<svg style="position:absolute;left:574.5px;top:78.6px" width="8" height="8" viewBox="0 0 8 8"><circle cx="4" cy="4" r="3.2" fill="#fff" stroke="#40b8a8" stroke-width="0.8"/><path d="M4 2.2V4H5.5" stroke="#40b8a8" stroke-width="0.5" fill="none"/></svg>
<div class="t" style="left:586px;top:79.3px;font-size:7.6px;color:#444;transform:scaleY(1.1);transform-origin:0 100%;">Gaug</div>
<div class="t" style="left:529.5px;top:87.8px;font-size:7.6px;color:#444;transform:scaleY(1.1);transform-origin:0 100%;">gaug...pass</div>
<svg style="position:absolute;left:574.5px;top:87.1px" width="8" height="8" viewBox="0 0 8 8"><circle cx="4" cy="4.3" r="2.8" fill="#2a7ad8"/><path d="M3.2 5L5 3.2" stroke="#fff" stroke-width="0.7"/></svg>
<div class="t" style="left:586px;top:87.8px;font-size:7.6px;color:#444;transform:scaleY(1.1);transform-origin:0 100%;">Gaug</div>
<div class="t" style="left:529.5px;top:96.3px;font-size:7.6px;color:#444;transform:scaleY(1.1);transform-origin:0 100%;">gaugeDial</div>
<svg style="position:absolute;left:574.5px;top:95.6px" width="8" height="8" viewBox="0 0 8 8"><circle cx="4" cy="4" r="3.7" fill="#151515"/><circle cx="4" cy="4" r="2.3" fill="#3a3a3a"/><path d="M4 4L5.4 2.6" stroke="#e04040" stroke-width="0.7"/></svg>
<div class="t" style="left:586px;top:96.3px;font-size:7.6px;color:#444;transform:scaleY(1.1);transform-origin:0 100%;">Gaug</div>
<div class="t" style="left:529.5px;top:104.8px;font-size:7.6px;color:#444;transform:scaleY(1.1);transform-origin:0 100%;">gaug...sBar</div>
<svg style="position:absolute;left:574.5px;top:104.1px" width="8" height="8" viewBox="0 0 8 8"><path d="M0.8 3.5A3.3 3.3 0 0 1 7.2 3.5" stroke="#7ac87a" stroke-width="0.5" fill="none"/><circle cx="4" cy="4.8" r="2.2" fill="#3a4a78"/></svg>
<div class="t" style="left:586px;top:104.8px;font-size:7.6px;color:#444;transform:scaleY(1.1);transform-origin:0 100%;">Gaug</div>
<div class="t" style="left:529.5px;top:113.3px;font-size:7.6px;color:#444;transform:scaleY(1.1);transform-origin:0 100%;">gaug...ound</div>
<svg style="position:absolute;left:574.5px;top:112.6px" width="8" height="8" viewBox="0 0 8 8"><circle cx="4" cy="4" r="3.7" fill="#5a6ab8"/><path d="M4 1.8V4L5.3 4.8" stroke="#dde" stroke-width="0.5" fill="none"/></svg>
<div class="t" style="left:586px;top:113.3px;font-size:7.6px;color:#444;transform:scaleY(1.1);transform-origin:0 100%;">Gaug</div>
<div class="t" style="left:529.5px;top:121.8px;font-size:7.6px;color:#444;transform:scaleY(1.1);transform-origin:0 100%;">gaug...mple</div>
<svg style="position:absolute;left:574.5px;top:121.1px" width="8" height="8" viewBox="0 0 8 8"><path d="M0.8 3.5A3.3 3.3 0 0 1 7.2 3.5" stroke="#7ac87a" stroke-width="0.5" fill="none"/><circle cx="4" cy="4.8" r="2.2" fill="#3a4a78"/></svg>
<div class="t" style="left:586px;top:121.8px;font-size:7.6px;color:#444;transform:scaleY(1.1);transform-origin:0 100%;">Gaug</div>
<div class="t" style="left:530px;top:53.7px;font-size:7.7px;color:#383838;transform:scaleY(1.1);transform-origin:0 100%;">Widget</div>
<svg style="position:absolute;left:574.5px;top:52.3px" width="8" height="8" viewBox="0 0 8 8"><rect x="0.4" y="0.4" width="7.2" height="7.2" fill="#e8eaf0" stroke="#8aa0c8" stroke-width="0.6"/><path d="M1.5 6.5L6.5 1.5M1 4L4 1M4 7L7 4" stroke="#b8bcc8" stroke-width="0.6"/></svg>
<div class="t" style="left:586px;top:53.7px;font-size:7.7px;color:#383838;transform:scaleY(1.1);transform-origin:0 100%;">QWi</div>
<div style="position:absolute;left:508px;top:206.6px;width:92px;height:1.6px;background:#2e2e2e;"></div>
<div style="position:absolute;left:508px;top:208.2px;width:92px;height:11px;background:#fff;border:1px solid #3a3a3a;border-right:none;"></div>
<div class="t" style="left:510.5px;top:210.6px;font-size:7.4px;color:#9a9a9a;transform:scaleY(1.08);transform-origin:0 100%;">Filter</div>
<div style="position:absolute;left:508px;top:219.2px;width:92px;height:11px;background:#f4f4f4;"></div>
<div class="t" style="left:509.3px;top:222.2px;font-size:7.2px;color:#255a9c;transform:scaleY(1.1);transform-origin:0 100%;">gaugeCar : GaugeCar</div>
<div style="position:absolute;left:508px;top:230.2px;width:92px;height:14px;background:linear-gradient(#fafafa,#efefef);border-bottom:1px solid #d2d2d2;border-top:1px solid #e0e0e0;"></div>
<div style="position:absolute;left:582.2px;top:230.2px;width:1px;height:14px;background:#d8d8d8;"></div>
<div class="t" style="left:509.5px;top:233.8px;font-size:7.5px;color:#2a5c9e;-webkit-text-stroke:0.1px #2a5c9e;">属性</div>
<div class="t" style="left:585px;top:233.8px;font-size:7.5px;color:#2a5c9e;-webkit-text-stroke:0.1px #2a5c9e;">值</div>
<div style="position:absolute;left:508px;top:244.3px;width:92px;height:10.56px;background:#e0fbe0;border-bottom:1px solid #d6e6d6;"></div>
<div style="position:absolute;left:582.2px;top:244.3px;width:1px;height:10.56px;background:#d2d2d2;"></div>
<div class="t" style="left:518.8px;top:246.8px;font-size:7.75px;color:#383838;transform:scaleY(1.1);transform-origin:0 100%;">startAngle</div>
<div class="t" style="left:584.4px;top:246.8px;font-size:7.7px;color:#383838;transform:scaleY(1.1);transform-origin:0 100%;">45</div>
<div style="position:absolute;left:508px;top:254.86px;width:92px;height:10.56px;background:#bff9bf;border-bottom:1px solid #d6e6d6;"></div>
<div style="position:absolute;left:582.2px;top:254.86px;width:1px;height:10.56px;background:#d2d2d2;"></div>
<div class="t" style="left:518.8px;top:257.36px;font-size:7.75px;color:#383838;transform:scaleY(1.1);transform-origin:0 100%;">endAngle</div>
<div class="t" style="left:584.4px;top:257.36px;font-size:7.7px;color:#383838;transform:scaleY(1.1);transform-origin:0 100%;">45</div>
<div style="position:absolute;left:508px;top:265.42px;width:92px;height:10.56px;background:#e0fbe0;border-bottom:1px solid #d6e6d6;"></div>
<div style="position:absolute;left:582.2px;top:265.42px;width:1px;height:10.56px;background:#d2d2d2;"></div>
<div class="t" style="left:518.8px;top:267.92px;font-size:7.75px;color:#383838;transform:scaleY(1.1);transform-origin:0 100%;">animation</div>
<div style="position:absolute;left:585.2px;top:267.62px;width:6.5px;height:6.5px;background:#fff;border:0.8px solid #b8b8b8;border-radius:1px;"></div>
<div style="position:absolute;left:508px;top:275.98px;width:92px;height:10.56px;background:#bff9bf;border-bottom:1px solid #d6e6d6;"></div>
<div style="position:absolute;left:582.2px;top:275.98px;width:1px;height:10.56px;background:#d2d2d2;"></div>
<div class="t" style="left:518.8px;top:278.48px;font-size:7.75px;color:#383838;transform:scaleY(1.1);transform-origin:0 100%;">animationStep</div>
<div class="t" style="left:584.4px;top:278.48px;font-size:7.7px;color:#383838;transform:scaleY(1.1);transform-origin:0 100%;">0.500</div>
<div style="position:absolute;left:508px;top:286.54px;width:92px;height:10.56px;background:#e0fbe0;border-bottom:1px solid #d6e6d6;"></div>
<div style="position:absolute;left:582.2px;top:286.54px;width:1px;height:10.56px;background:#d2d2d2;"></div>
<svg style="position:absolute;left:511.5px;top:289.34000000000003px" width="5" height="6" viewBox="0 0 5 6"><path d="M0.6 0.6L4 3L0.6 5.4Z" fill="#2a2a2a"/></svg>
<div class="t" style="left:518.8px;top:289.04px;font-size:7.75px;color:#383838;transform:scaleY(1.1);transform-origin:0 100%;">outerCircleColor</div>
<div style="position:absolute;left:584.6px;top:287.94px;width:8px;height:8px;background:#505050;"></div>
<div class="t" style="left:596px;top:289.04px;font-size:7.7px;color:#383838;transform:scaleY(1.1);transform-origin:0 100%;">[5</div>
<div style="position:absolute;left:508px;top:297.1px;width:92px;height:10.56px;background:#bff9bf;border-bottom:1px solid #d6e6d6;"></div>
<div style="position:absolute;left:582.2px;top:297.1px;width:1px;height:10.56px;background:#d2d2d2;"></div>
<svg style="position:absolute;left:511.5px;top:299.90000000000003px" width="5" height="6" viewBox="0 0 5 6"><path d="M0.6 0.6L4 3L0.6 5.4Z" fill="#2a2a2a"/></svg>
<div class="t" style="left:518.8px;top:299.6px;font-size:7.75px;color:#383838;transform:scaleY(1.1);transform-origin:0 100%;">innerCircleColor</div>
<div style="position:absolute;left:584.6px;top:298.5px;width:8px;height:8px;background:#3a3a3a;"></div>
<div class="t" style="left:596px;top:299.6px;font-size:7.7px;color:#383838;transform:scaleY(1.1);transform-origin:0 100%;">[6</div>
<div style="position:absolute;left:508px;top:307.66px;width:92px;height:10.56px;background:#e0fbe0;border-bottom:1px solid #d6e6d6;"></div>
<div style="position:absolute;left:582.2px;top:307.66px;width:1px;height:10.56px;background:#d2d2d2;"></div>
<svg style="position:absolute;left:511.5px;top:310.46000000000004px" width="5" height="6" viewBox="0 0 5 6"><path d="M0.6 0.6L4 3L0.6 5.4Z" fill="#2a2a2a"/></svg>
<div class="t" style="left:518.8px;top:310.16px;font-size:7.75px;color:#383838;transform:scaleY(1.1);transform-origin:0 100%;">pieColorStart</div>
<div style="position:absolute;left:584.6px;top:309.06px;width:8px;height:8px;background:#1abc9c;"></div>
<div class="t" style="left:596px;top:310.16px;font-size:7.7px;color:#383838;transform:scaleY(1.1);transform-origin:0 100%;">[2</div>
<div style="position:absolute;left:508px;top:318.22px;width:92px;height:10.56px;background:#bff9bf;border-bottom:1px solid #d6e6d6;"></div>
<div style="position:absolute;left:582.2px;top:318.22px;width:1px;height:10.56px;background:#d2d2d2;"></div>
<svg style="position:absolute;left:511.5px;top:321.02000000000004px" width="5" height="6" viewBox="0 0 5 6"><path d="M0.6 0.6L4 3L0.6 5.4Z" fill="#2a2a2a"/></svg>
<div class="t" style="left:518.8px;top:320.72px;font-size:7.75px;color:#383838;transform:scaleY(1.1);transform-origin:0 100%;">pieColorMid</div>
<div style="position:absolute;left:584.6px;top:319.62px;width:8px;height:8px;background:#dcd800;"></div>
<div class="t" style="left:596px;top:320.72px;font-size:7.7px;color:#383838;transform:scaleY(1.1);transform-origin:0 100%;">[2</div>
<div style="position:absolute;left:508px;top:328.78000000000003px;width:92px;height:10.56px;background:#e0fbe0;border-bottom:1px solid #d6e6d6;"></div>
<div style="position:absolute;left:582.2px;top:328.78000000000003px;width:1px;height:10.56px;background:#d2d2d2;"></div>
<svg style="position:absolute;left:511.5px;top:331.58000000000004px" width="5" height="6" viewBox="0 0 5 6"><path d="M0.6 0.6L4 3L0.6 5.4Z" fill="#2a2a2a"/></svg>
<div class="t" style="left:518.8px;top:331.28000000000003px;font-size:7.75px;color:#383838;transform:scaleY(1.1);transform-origin:0 100%;">pieColorEnd</div>
<div style="position:absolute;left:584.6px;top:330.18px;width:8px;height:8px;background:#f06060;"></div>
<div class="t" style="left:596px;top:331.28000000000003px;font-size:7.7px;color:#383838;transform:scaleY(1.1);transform-origin:0 100%;">[2</div>
<div style="position:absolute;left:508px;top:339.34000000000003px;width:92px;height:10.56px;background:#bff9bf;border-bottom:1px solid #d6e6d6;"></div>
<div style="position:absolute;left:582.2px;top:339.34000000000003px;width:1px;height:10.56px;background:#d2d2d2;"></div>
<svg style="position:absolute;left:511.5px;top:342.14000000000004px" width="5" height="6" viewBox="0 0 5 6"><path d="M0.6 0.6L4 3L0.6 5.4Z" fill="#2a2a2a"/></svg>
<div class="t" style="left:518.8px;top:341.84000000000003px;font-size:7.75px;color:#383838;transform:scaleY(1.1);transform-origin:0 100%;">coverCircleColor</div>
<div style="position:absolute;left:584.6px;top:340.74px;width:8px;height:8px;background:#666;"></div>
<div class="t" style="left:596px;top:341.84000000000003px;font-size:7.7px;color:#383838;transform:scaleY(1.1);transform-origin:0 100%;">[1</div>
<div style="position:absolute;left:508px;top:349.90000000000003px;width:92px;height:10.56px;background:#e0fbe0;border-bottom:1px solid #d6e6d6;"></div>
<div style="position:absolute;left:582.2px;top:349.90000000000003px;width:1px;height:10.56px;background:#d2d2d2;"></div>
<svg style="position:absolute;left:511.5px;top:352.70000000000005px" width="5" height="6" viewBox="0 0 5 6"><path d="M0.6 0.6L4 3L0.6 5.4Z" fill="#2a2a2a"/></svg>
<div class="t" style="left:518.8px;top:352.40000000000003px;font-size:7.75px;color:#383838;transform:scaleY(1.1);transform-origin:0 100%;">scaleColor</div>
<div style="position:absolute;left:584.6px;top:351.3px;width:8px;height:8px;background:#fff;"></div>
<div class="t" style="left:596px;top:352.40000000000003px;font-size:7.7px;color:#383838;transform:scaleY(1.1);transform-origin:0 100%;">[2</div>
<div style="position:absolute;left:508px;top:360.46000000000004px;width:92px;height:10.56px;background:#bff9bf;border-bottom:1px solid #d6e6d6;"></div>
<div style="position:absolute;left:582.2px;top:360.46000000000004px;width:1px;height:10.56px;background:#d2d2d2;"></div>
<svg style="position:absolute;left:511.5px;top:363.26000000000005px" width="5" height="6" viewBox="0 0 5 6"><path d="M0.6 0.6L4 3L0.6 5.4Z" fill="#2a2a2a"/></svg>
<div class="t" style="left:518.8px;top:362.96000000000004px;font-size:7.75px;color:#383838;transform:scaleY(1.1);transform-origin:0 100%;">pointerColor</div>
<div style="position:absolute;left:584.6px;top:361.86px;width:8px;height:8px;background:#f06060;"></div>
<div class="t" style="left:596px;top:362.96000000000004px;font-size:7.7px;color:#383838;transform:scaleY(1.1);transform-origin:0 100%;">[2</div>
<div style="position:absolute;left:508px;top:371.02px;width:92px;height:10.56px;background:#e0fbe0;border-bottom:1px solid #d6e6d6;"></div>
<div style="position:absolute;left:582.2px;top:371.02px;width:1px;height:10.56px;background:#d2d2d2;"></div>
<svg style="position:absolute;left:511.5px;top:373.82px" width="5" height="6" viewBox="0 0 5 6"><path d="M0.6 0.6L4 3L0.6 5.4Z" fill="#2a2a2a"/></svg>
<div class="t" style="left:518.8px;top:373.52px;font-size:7.75px;color:#383838;transform:scaleY(1.1);transform-origin:0 100%;">centerCircleColor</div>
<div style="position:absolute;left:584.6px;top:372.41999999999996px;width:8px;height:8px;background:#c8c8c8;"></div>
<div class="t" style="left:596px;top:373.52px;font-size:7.7px;color:#383838;transform:scaleY(1.1);transform-origin:0 100%;">[2</div>
<div style="position:absolute;left:508px;top:381.58000000000004px;width:92px;height:10.56px;background:#bff9bf;border-bottom:1px solid #d6e6d6;"></div>
<div style="position:absolute;left:582.2px;top:381.58000000000004px;width:1px;height:10.56px;background:#d2d2d2;"></div>
<svg style="position:absolute;left:511.5px;top:384.38000000000005px" width="5" height="6" viewBox="0 0 5 6"><path d="M0.6 0.6L4 3L0.6 5.4Z" fill="#2a2a2a"/></svg>
<div class="t" style="left:518.8px;top:384.08000000000004px;font-size:7.75px;color:#383838;transform:scaleY(1.1);transform-origin:0 100%;">textColor</div>
<div style="position:absolute;left:584.6px;top:382.98px;width:8px;height:8px;background:#000;"></div>
<div class="t" style="left:596px;top:384.08000000000004px;font-size:7.7px;color:#383838;transform:scaleY(1.1);transform-origin:0 100%;">[0</div>
<div style="position:absolute;left:508px;top:392.14px;width:92px;height:10.56px;background:#e0fbe0;border-bottom:1px solid #d6e6d6;"></div>
<div style="position:absolute;left:582.2px;top:392.14px;width:1px;height:10.56px;background:#d2d2d2;"></div>
<div class="t" style="left:518.8px;top:394.64px;font-size:7.75px;color:#383838;transform:scaleY(1.1);transform-origin:0 100%;">showOverlay</div>
<div style="position:absolute;left:585.2px;top:394.34px;width:6.5px;height:6.5px;background:#fff;border:0.8px solid #b8b8b8;border-radius:1px;"></div>
<div style="position:absolute;left:508px;top:402.70000000000005px;width:92px;height:10.56px;background:#bff9bf;border-bottom:1px solid #d6e6d6;"></div>
<div style="position:absolute;left:582.2px;top:402.70000000000005px;width:1px;height:10.56px;background:#d2d2d2;"></div>
<svg style="position:absolute;left:511.5px;top:405.50000000000006px" width="5" height="6" viewBox="0 0 5 6"><path d="M0.6 0.6L4 3L0.6 5.4Z" fill="#2a2a2a"/></svg>
<div class="t" style="left:518.8px;top:405.20000000000005px;font-size:7.75px;color:#383838;transform:scaleY(1.1);transform-origin:0 100%;">overlayColor</div>
<div style="position:absolute;left:584.6px;top:404.1px;width:8px;height:8px;background:#fff;"></div>
<div class="t" style="left:596px;top:405.20000000000005px;font-size:7.7px;color:#383838;transform:scaleY(1.1);transform-origin:0 100%;">[2</div>
<div style="position:absolute;left:508px;top:413.26px;width:92px;height:10.56px;background:#e0fbe0;border-bottom:1px solid #d6e6d6;"></div>
<div style="position:absolute;left:582.2px;top:413.26px;width:1px;height:10.56px;background:#d2d2d2;"></div>
<div class="t" style="left:518.8px;top:415.76px;font-size:7.75px;color:#383838;transform:scaleY(1.1);transform-origin:0 100%;">pieStyle</div>
<div class="t" style="left:584.4px;top:415.76px;font-size:7.7px;color:#383838;transform:scaleY(1.1);transform-origin:0 100%;">PieSt</div>
<div style="position:absolute;left:508px;top:423.82000000000005px;width:92px;height:10.56px;background:#bff9bf;border-bottom:1px solid #d6e6d6;"></div>
<div style="position:absolute;left:582.2px;top:423.82000000000005px;width:1px;height:10.56px;background:#d2d2d2;"></div>
<div class="t" style="left:518.8px;top:426.32000000000005px;font-size:7.75px;color:#383838;transform:scaleY(1.1);transform-origin:0 100%;">pointerStyle</div>
<div class="t" style="left:584.4px;top:426.32000000000005px;font-size:7.7px;color:#383838;transform:scaleY(1.1);transform-origin:0 100%;">Poin</div>
<svg style="position:absolute;left:9.5px;top:439.5px" width="9" height="9" viewBox="0 0 9 9"><rect x="0.5" y="0.5" width="8" height="8" fill="#ddd"/><rect x="3.2" y="1.8" width="4.2" height="5.4" fill="#222"/></svg>
<div style="position:absolute;left:23px;top:439px;width:99.5px;height:10.5px;background:#fff;border:1px solid #bbb;border-radius:1px;"></div>
<svg style="position:absolute;left:25px;top:440.5px" width="9" height="7" viewBox="0 0 9 7"><circle cx="2.5" cy="2.8" r="1.8" fill="none" stroke="#555" stroke-width="0.7"/><path d="M3.8 3.8L8 3.8M6.2 3.8V5.5M7.5 3.8V5" stroke="#555" stroke-width="0.7"/></svg>
<div class="t" style="left:37.3px;top:440.9px;font-size:7.5px;color:#8e8e8e;transform:scaleY(1.08);transform-origin:0 100%;">Type to locate (Ctr...</div>
<div style="position:absolute;left:128.3px;top:438.8px;width:7.5px;height:10.4px;background:linear-gradient(#7a7a7a,#5a5a5a);"></div>
<div class="t" style="left:129.9px;top:440.6px;font-size:7.2px;color:#dcdcdc;">1</div>
<div style="position:absolute;left:136.7px;top:438.8px;width:18px;height:10.4px;background:linear-gradient(#f0f0f0,#d6d6d6);"></div>
<div class="t" style="left:137.89999999999998px;top:440.6px;font-size:7.2px;color:#222;">问题</div>
<div style="position:absolute;left:158.2px;top:438.8px;width:7.5px;height:10.4px;background:linear-gradient(#7a7a7a,#5a5a5a);"></div>
<div class="t" style="left:159.79999999999998px;top:440.6px;font-size:7.2px;color:#dcdcdc;">2</div>
<div style="position:absolute;left:167px;top:438.8px;width:52.5px;height:10.4px;background:linear-gradient(#f0f0f0,#d6d6d6);"></div>
<div class="t" style="left:168.2px;top:440.6px;font-size:7.2px;color:#222;">Search Results</div>
<div style="position:absolute;left:222.5px;top:438.8px;width:7.5px;height:10.4px;background:linear-gradient(#7a7a7a,#5a5a5a);"></div>
<div class="t" style="left:224.1px;top:440.6px;font-size:7.2px;color:#dcdcdc;">3</div>
<div style="position:absolute;left:230.8px;top:438.8px;width:47.5px;height:10.4px;background:linear-gradient(#f0f0f0,#d6d6d6);"></div>
<div class="t" style="left:232.0px;top:440.6px;font-size:7.2px;color:#222;">应用程序输出</div>
<div style="position:absolute;left:281.5px;top:438.8px;width:7.5px;height:10.4px;background:linear-gradient(#7a7a7a,#5a5a5a);"></div>
<div class="t" style="left:283.1px;top:440.6px;font-size:7.2px;color:#dcdcdc;">4</div>
<div style="position:absolute;left:290px;top:438.8px;width:33px;height:10.4px;background:linear-gradient(#f0f0f0,#d6d6d6);"></div>
<div class="t" style="left:291.2px;top:440.6px;font-size:7.2px;color:#222;">编译输出</div>
<div style="position:absolute;left:327.2px;top:438.8px;width:7.5px;height:10.4px;background:linear-gradient(#7a7a7a,#5a5a5a);"></div>
<div class="t" style="left:328.8px;top:440.6px;font-size:7.2px;color:#dcdcdc;">6</div>
<div style="position:absolute;left:336.5px;top:438.8px;width:33px;height:10.4px;background:linear-gradient(#f0f0f0,#d6d6d6);"></div>
<div class="t" style="left:337.7px;top:440.6px;font-size:7.2px;color:#222;">概要信息</div>
<div style="position:absolute;left:372px;top:438.8px;width:9px;height:10.4px;background:linear-gradient(#7a7a7a,#5a5a5a);border-radius:1px;"></div>
<svg style="position:absolute;left:374.5px;top:440.5px" width="4" height="7" viewBox="0 0 4 7"><path d="M2 0.5L3.5 2.6H0.5Z M2 6.5L3.5 4.4H0.5Z" fill="#ddd"/></svg>
</body></html>
